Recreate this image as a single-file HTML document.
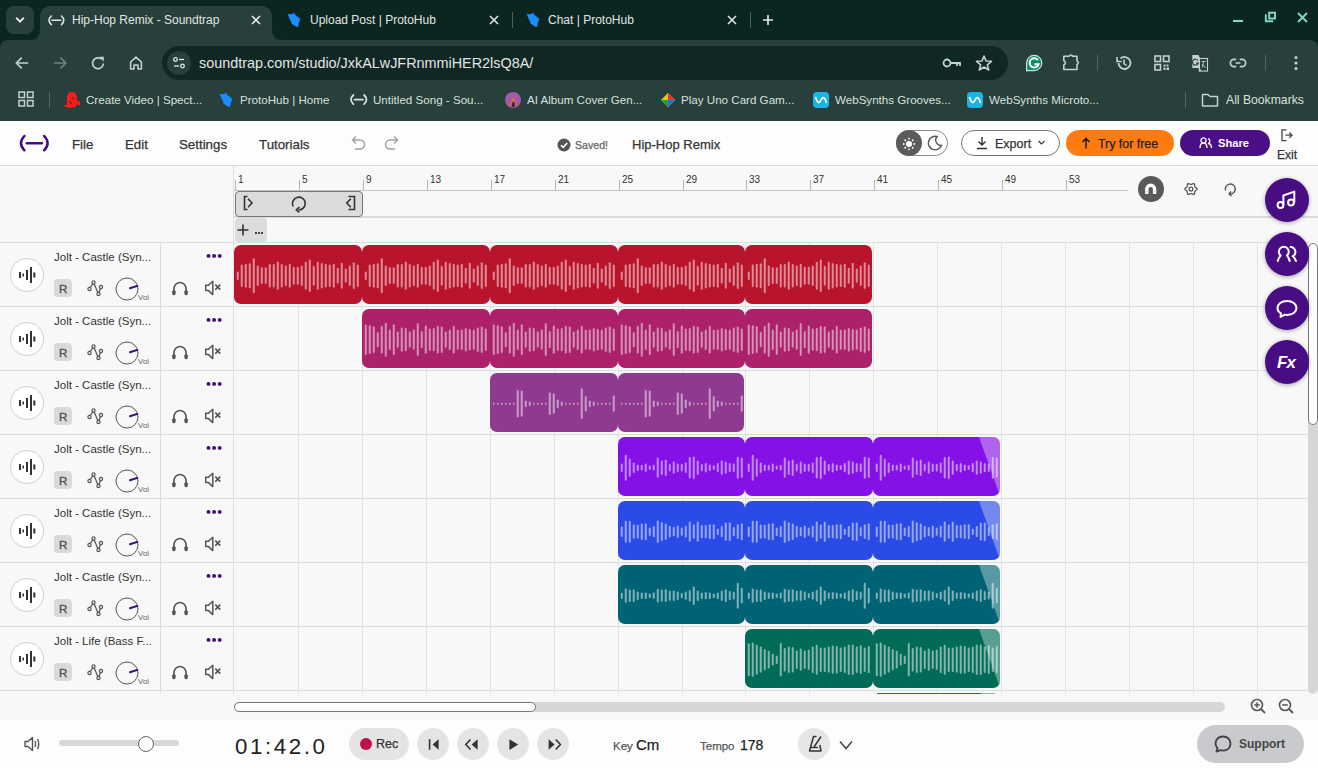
<!DOCTYPE html><html><head><meta charset="utf-8"><style>
*{margin:0;padding:0;box-sizing:border-box}
html,body{width:1318px;height:768px;overflow:hidden;background:#0b2521;font-family:"Liberation Sans", sans-serif}
.abs{position:absolute}
</style></head><body>
<div class="abs" style="left:0;top:0;width:1318px;height:40px;background:#0b2521"></div>
<div class="abs" style="left:6px;top:6px;width:28px;height:28px;border-radius:8px;background:#283f3b"></div>
<svg style="position:absolute;left:14px;top:14px" width="12" height="12" viewBox="0 0 12 12" ><path d="M2.2 3.8 L6 7.6 L9.8 3.8" stroke="#e1e6e4" stroke-width="2" fill="none"/></svg>
<div class="abs" style="left:40px;top:6px;width:232px;height:40px;border-radius:10px 10px 0 0;background:#283f3b"></div>
<svg style="position:absolute;left:30px;top:30px" width="10" height="10" viewBox="0 0 10 10" ><path d="M0 10 Q10 10 10 0 L10 10 Z" fill="#283f3b"/></svg>
<svg style="position:absolute;left:272px;top:30px" width="10" height="10" viewBox="0 0 10 10" ><path d="M10 10 Q0 10 0 0 L0 10 Z" fill="#283f3b"/></svg>
<svg style="position:absolute;left:45.6px;top:12.599999999999998px" width="20.8" height="14.6" viewBox="0 0 20.8 14.6" ><path d="M5.3 3 Q0.7000000000000002 7.3 5.3 11.6" stroke="#e1e6e4" stroke-width="1.6" fill="none" stroke-linecap="round"/><path d="M15.5 3 Q20.1 7.3 15.5 11.6" stroke="#e1e6e4" stroke-width="1.6" fill="none" stroke-linecap="round"/><line x1="6.0" y1="7.3" x2="14.8" y2="7.3" stroke="#e1e6e4" stroke-width="1.6" stroke-linecap="round"/></svg>
<div style="position:absolute;left:72px;top:14px;font-size:12px;line-height:12px;color:#e1e6e4;font-weight:normal;white-space:nowrap;">Hip-Hop Remix - Soundtrap</div>
<svg style="position:absolute;left:251.0px;top:15.0px" width="10" height="10" viewBox="0 0 10 10" ><path d="M1 1 L9 9 M9 1 L1 9" stroke="#e1e6e4" stroke-width="1.6"/></svg>
<svg style="position:absolute;left:283px;top:8px" width="22" height="22" viewBox="0 0 22 22" ><path d="M5.2 6.3 L9.5 6.7 L10.6 4.9 L12.3 7.2 L16.9 10.9 L16 13.5 L15.2 15.2 L14.9 18.6 L13.2 18.3 L8.9 15.5 L8.3 12.9 L7.2 11.2 Z" fill="#1a8fff" stroke="#1a8fff" stroke-width="0.8" stroke-linejoin="round"/></svg>
<div style="position:absolute;left:310px;top:14px;font-size:12px;line-height:12px;color:#e1e6e4;font-weight:normal;white-space:nowrap;">Upload Post | ProtoHub</div>
<svg style="position:absolute;left:489.0px;top:15.0px" width="10" height="10" viewBox="0 0 10 10" ><path d="M1 1 L9 9 M9 1 L1 9" stroke="#e1e6e4" stroke-width="1.6"/></svg>
<div class="abs" style="left:512px;top:12px;width:1px;height:16px;background:#4d605c"></div>
<svg style="position:absolute;left:522px;top:8px" width="22" height="22" viewBox="0 0 22 22" ><path d="M5.2 6.3 L9.5 6.7 L10.6 4.9 L12.3 7.2 L16.9 10.9 L16 13.5 L15.2 15.2 L14.9 18.6 L13.2 18.3 L8.9 15.5 L8.3 12.9 L7.2 11.2 Z" fill="#1a8fff" stroke="#1a8fff" stroke-width="0.8" stroke-linejoin="round"/></svg>
<div style="position:absolute;left:548px;top:14px;font-size:12px;line-height:12px;color:#e1e6e4;font-weight:normal;white-space:nowrap;">Chat | ProtoHub</div>
<svg style="position:absolute;left:727.0px;top:15.0px" width="10" height="10" viewBox="0 0 10 10" ><path d="M1 1 L9 9 M9 1 L1 9" stroke="#e1e6e4" stroke-width="1.6"/></svg>
<div class="abs" style="left:750px;top:12px;width:1px;height:16px;background:#4d605c"></div>
<svg style="position:absolute;left:763px;top:15px" width="10" height="10" viewBox="0 0 10 10" ><path d="M5 0 V10 M0 5 H10" stroke="#e1e6e4" stroke-width="1.7"/></svg>
<svg style="position:absolute;left:1230px;top:12px" width="16" height="14" viewBox="0 0 16 14" ><path d="M3 9 H13" stroke="#7fd8c6" stroke-width="2.1"/></svg>
<svg style="position:absolute;left:1260px;top:8px" width="20" height="18" viewBox="0 0 20 18" ><rect x="9.2" y="4.7" width="5.8" height="5.8" stroke="#7fd8c6" stroke-width="2" fill="none"/><path d="M5.8 6.3 V13.2 H13.2" stroke="#7fd8c6" stroke-width="1.9" fill="none"/></svg>
<svg style="position:absolute;left:1296.5px;top:11.5px" width="11" height="11" viewBox="0 0 11 11" ><path d="M1 1 L10 10 M10 1 L1 10" stroke="#7fd8c6" stroke-width="1.9"/></svg>
<div class="abs" style="left:0;top:40px;width:1318px;height:81px;background:#283f3b;border-radius:8px 8px 0 0"></div>
<svg style="position:absolute;left:13px;top:54px" width="18" height="18" viewBox="0 0 18 18" ><path d="M15.2 9 H3.4 M8.7 3.6 L3.4 9 L8.7 14.4" stroke="#c4d1cd" stroke-width="1.7" fill="none"/></svg>
<svg style="position:absolute;left:51px;top:54px" width="18" height="18" viewBox="0 0 18 18" ><path d="M3 9 H14.8 M9.5 3.6 L14.8 9 L9.5 14.4" stroke="#6f817d" stroke-width="1.7" fill="none"/></svg>
<svg style="position:absolute;left:89px;top:54px" width="18" height="18" viewBox="0 0 18 18" ><path d="M14.4 9.5 A5.4 5.4 0 1 1 12.6 5.2" stroke="#c4d1cd" stroke-width="1.7" fill="none"/><path d="M10.2 2.8 L14.8 2.8 L14.8 7.4 Z" fill="#c4d1cd"/></svg>
<svg style="position:absolute;left:127px;top:54px" width="18" height="18" viewBox="0 0 18 18" ><path d="M3.6 8 L9 3.2 L14.4 8 V15 H11 V11 H7 V15 H3.6 Z" stroke="#c4d1cd" stroke-width="1.6" fill="none" stroke-linejoin="round"/></svg>
<div class="abs" style="left:162px;top:46px;width:846px;height:34px;border-radius:17px;background:#112724"></div>
<div class="abs" style="left:167px;top:51px;width:24px;height:24px;border-radius:12px;background:#283f3b"></div>
<svg style="position:absolute;left:171px;top:55px" width="16" height="16" viewBox="0 0 16 16" ><circle cx="4.5" cy="4.5" r="1.8" stroke="#e1e6e4" stroke-width="1.3" fill="none"/><path d="M8 4.5 H13" stroke="#e1e6e4" stroke-width="1.3"/><circle cx="11.5" cy="11" r="1.8" stroke="#e1e6e4" stroke-width="1.3" fill="none"/><path d="M3 11 H8" stroke="#e1e6e4" stroke-width="1.3"/></svg>
<div style="position:absolute;left:199px;top:56px;font-size:14.4px;line-height:14.4px;color:#e1e6e4;font-weight:normal;white-space:nowrap;">soundtrap.com/studio/JxkALwJFRnmmiHER2lsQ8A/</div>
<svg style="position:absolute;left:942px;top:55px" width="20" height="16" viewBox="0 0 20 16" ><circle cx="5" cy="8" r="3.5" stroke="#c4d1cd" stroke-width="1.8" fill="none"/><path d="M8.5 8 H18 V11 M15 8 V11" stroke="#c4d1cd" stroke-width="1.8" fill="none"/></svg>
<svg style="position:absolute;left:975px;top:54px" width="18" height="18" viewBox="0 0 18 18" ><path d="M9 2 L11 7 L16.5 7.3 L12.3 10.8 L13.7 16 L9 13 L4.3 16 L5.7 10.8 L1.5 7.3 L7 7 Z" stroke="#c4d1cd" stroke-width="1.6" fill="none" stroke-linejoin="round"/></svg>
<svg style="position:absolute;left:1024px;top:53px" width="20" height="20" viewBox="0 0 20 20" ><path d="M2.6 18 V10 A7.6 7.6 0 1 1 10.2 17.6 H2.6 Z" fill="#0e8a6c" stroke="#cfe0d9" stroke-width="1.2" stroke-linejoin="round"/><path d="M14 7.2 A4.6 4.6 0 1 0 14.6 11.2 H10.4" stroke="#fff" stroke-width="2" fill="none"/></svg>
<svg style="position:absolute;left:1061px;top:52px" width="20" height="20" viewBox="0 0 20 20" ><path d="M2.8 4.2 H8.2 A1.8 1.8 0 0 1 11.6 4.2 H16 V9.1 A1.8 1.8 0 0 1 16 12.5 V17.5 H2.8 V13 A2.2 2.2 0 0 0 2.8 8.8 Z" stroke="#c4d1cd" stroke-width="1.6" fill="none" stroke-linejoin="round"/></svg>
<div class="abs" style="left:1097px;top:55px;width:1px;height:16px;background:#55675f"></div>
<svg style="position:absolute;left:1115px;top:54px" width="18" height="18" viewBox="0 0 18 18" ><path d="M3.5 9 A6 6 0 1 0 5.5 4.5" stroke="#c4d1cd" stroke-width="1.8" fill="none"/><path d="M2 3 V7.5 H6.5" stroke="#c4d1cd" stroke-width="1.6" fill="none"/><path d="M9 5.5 V9.5 L11.5 11.5" stroke="#c4d1cd" stroke-width="1.6" fill="none"/></svg>
<svg style="position:absolute;left:1153px;top:54px" width="18" height="18" viewBox="0 0 18 18" ><rect x="2" y="2" width="5.5" height="5.5" stroke="#c4d1cd" stroke-width="1.6" fill="none"/><rect x="10.5" y="2" width="5.5" height="5.5" stroke="#c4d1cd" stroke-width="1.6" fill="none"/><rect x="2" y="10.5" width="5.5" height="5.5" stroke="#c4d1cd" stroke-width="1.6" fill="none"/><path d="M10.5 10.5 h2 v2 h-2z M13.5 13.5 h2.5 v2.5 h-2.5z M13.5 10.5 h2 v2 h-2z M10.5 13.5 h2 v2.5 h-2z" fill="#c4d1cd"/></svg>
<svg style="position:absolute;left:1190px;top:52px" width="20" height="21" viewBox="0 0 20 21" ><path d="M2.3 3 H8.6 L10 6.2 V16 H2.3 Z" fill="#c4d1cd"/><rect x="9.3" y="6.5" width="8.2" height="12.6" stroke="#c4d1cd" stroke-width="1.1" fill="none"/><path d="M9.3 16 L10.5 19" stroke="#c4d1cd" stroke-width="1.2"/><path d="M8 8.6 A3 3 0 1 0 8.3 11.2 H5.9" stroke="#2a3f3b" stroke-width="1.2" fill="none"/><path d="M11.5 9.5 H15.8 M13.6 9 L12.2 15.5 M12.5 12 L15.5 16" stroke="#c4d1cd" stroke-width="0.9"/></svg>
<svg style="position:absolute;left:1228px;top:54px" width="20" height="18" viewBox="0 0 20 18" ><path d="M8.2 5.4 H6 A3.6 3.6 0 0 0 6 12.6 H8.2 M11.8 5.4 H14 A3.6 3.6 0 0 1 14 12.6 H11.8 M7.6 9 H12.4" stroke="#c4d1cd" stroke-width="1.7" fill="none"/></svg>
<div class="abs" style="left:1265px;top:55px;width:1px;height:16px;background:#55675f"></div>
<svg style="position:absolute;left:1290px;top:54px" width="12" height="18" viewBox="0 0 12 18" ><circle cx="6" cy="3.5" r="1.6" fill="#c4d1cd"/><circle cx="6" cy="9" r="1.6" fill="#c4d1cd"/><circle cx="6" cy="14.5" r="1.6" fill="#c4d1cd"/></svg>
<svg style="position:absolute;left:18px;top:91px" width="16" height="16" viewBox="0 0 16 16" ><rect x="1" y="1" width="5.5" height="5.5" stroke="#c4d1cd" stroke-width="1.5" fill="none"/><rect x="9.5" y="1" width="5.5" height="5.5" stroke="#c4d1cd" stroke-width="1.5" fill="none"/><rect x="1" y="9.5" width="5.5" height="5.5" stroke="#c4d1cd" stroke-width="1.5" fill="none"/><rect x="9.5" y="9.5" width="5.5" height="5.5" stroke="#c4d1cd" stroke-width="1.5" fill="none"/></svg>
<div class="abs" style="left:49px;top:92px;width:1px;height:16px;background:#55675f"></div>
<svg style="position:absolute;left:58px;top:88px" width="26" height="22" viewBox="0 0 26 22" ><path d="M9 16 V9 A5 5 0 0 1 19 9 V13 L22 13.5 L22 17 L19 16.5 Q17 20 12 19.8 Q7 19.5 6 17.5 Q8 17 9 16Z" fill="#ff1a1a"/><ellipse cx="14.6" cy="10.2" rx="0.7" ry="1.2" fill="#2a3f3b"/><ellipse cx="16.7" cy="10" rx="0.6" ry="0.7" fill="#7a2020"/><path d="M10.5 13.5 L13.5 14.5 L13 16" stroke="#2a3f3b" stroke-width="1" fill="none"/></svg>
<div style="position:absolute;left:86px;top:94px;font-size:11.6px;line-height:11.6px;color:#d9e0de;font-weight:normal;white-space:nowrap;">Create Video | Spect...</div>
<svg style="position:absolute;left:215px;top:88px" width="22" height="22" viewBox="0 0 22 22" ><path d="M5.2 6.3 L9.5 6.7 L10.6 4.9 L12.3 7.2 L16.9 10.9 L16 13.5 L15.2 15.2 L14.9 18.6 L13.2 18.3 L8.9 15.5 L8.3 12.9 L7.2 11.2 Z" fill="#1a8fff" stroke="#1a8fff" stroke-width="0.8" stroke-linejoin="round"/></svg>
<div style="position:absolute;left:240px;top:94px;font-size:11.6px;line-height:11.6px;color:#d9e0de;font-weight:normal;white-space:nowrap;">ProtoHub | Home</div>
<svg style="position:absolute;left:348.3px;top:92.30000000000001px" width="21.5" height="15.2" viewBox="0 0 21.5 15.2" ><path d="M5.4 3 Q0.6000000000000001 7.6 5.4 12.2" stroke="#d9e0de" stroke-width="1.8" fill="none" stroke-linecap="round"/><path d="M16.1 3 Q20.9 7.6 16.1 12.2" stroke="#d9e0de" stroke-width="1.8" fill="none" stroke-linecap="round"/><line x1="6.5" y1="7.6" x2="15.0" y2="7.6" stroke="#d9e0de" stroke-width="1.8" stroke-linecap="round"/></svg>
<div style="position:absolute;left:373px;top:94px;font-size:11.6px;line-height:11.6px;color:#d9e0de;font-weight:normal;white-space:nowrap;">Untitled Song - Sou...</div>
<svg style="position:absolute;left:505px;top:92px" width="16" height="16" viewBox="0 0 16 16" ><circle cx="8" cy="8" r="8" fill="#a45aa8"/><path d="M5 15 L6 8 Q8 4 10 7 L11.5 15 Z" fill="#d06a50"/><path d="M6.5 15 L7.5 10 L9.5 10 L10 15Z" fill="#3a2a3a"/></svg>
<div style="position:absolute;left:527px;top:94px;font-size:11.6px;line-height:11.6px;color:#d9e0de;font-weight:normal;white-space:nowrap;">AI Album Cover Gen...</div>
<svg style="position:absolute;left:660px;top:92px" width="16" height="16" viewBox="0 0 16 16" ><path d="M8 1 L15 8 L8 15 L1 8Z" fill="#f2c21a"/><path d="M8 1 L15 8 L8 8Z" fill="#e33"/><path d="M1 8 L8 15 L8 8Z" fill="#2a9d3a"/><path d="M8 8 L15 8 L8 15Z" fill="#2a6fdd"/></svg>
<div style="position:absolute;left:681px;top:94px;font-size:11.6px;line-height:11.6px;color:#d9e0de;font-weight:normal;white-space:nowrap;">Play Uno Card Gam...</div>
<svg style="position:absolute;left:813px;top:92px" width="16" height="16" viewBox="0 0 16 16" ><rect width="16" height="16" rx="4" fill="#19b5e5"/><path d="M2.5 5 Q5 14 8 8 Q11 2 13.5 11" stroke="#fff" stroke-width="1.6" fill="none"/></svg>
<div style="position:absolute;left:835px;top:94px;font-size:11.6px;line-height:11.6px;color:#d9e0de;font-weight:normal;white-space:nowrap;">WebSynths Grooves...</div>
<svg style="position:absolute;left:967px;top:92px" width="16" height="16" viewBox="0 0 16 16" ><rect width="16" height="16" rx="4" fill="#19b5e5"/><path d="M2.5 5 Q5 14 8 8 Q11 2 13.5 11" stroke="#fff" stroke-width="1.6" fill="none"/></svg>
<div style="position:absolute;left:989px;top:94px;font-size:11.6px;line-height:11.6px;color:#d9e0de;font-weight:normal;white-space:nowrap;">WebSynths Microto...</div>
<div class="abs" style="left:1185px;top:92px;width:1px;height:16px;background:#55675f"></div>
<svg style="position:absolute;left:1201px;top:92px" width="18" height="16" viewBox="0 0 18 16" ><path d="M1.5 2.5 H7 L9 4.5 H16.5 V14 H1.5 Z" stroke="#c4d1cd" stroke-width="1.5" fill="none" stroke-linejoin="round"/></svg>
<div style="position:absolute;left:1226px;top:94px;font-size:12.2px;line-height:12.2px;color:#d9e0de;font-weight:normal;white-space:nowrap;">All Bookmarks</div>
<div class="abs" style="left:0;top:121px;width:1318px;height:647px;background:#f8f8f8"></div>
<div class="abs" style="left:0;top:121px;width:1318px;height:45px;background:#fdfdfd;border-bottom:1px solid #d8d8d8;box-shadow:inset 0 -1px 0 #ffffff"></div>
<svg style="position:absolute;left:17.6px;top:133.04999999999998px" width="32.6" height="20.3" viewBox="0 0 32.6 20.3" ><path d="M6.4 3 Q-0.3999999999999999 10.15 6.4 17.3" stroke="#440b85" stroke-width="2.5" fill="none" stroke-linecap="round"/><path d="M26.200000000000003 3 Q33.0 10.15 26.200000000000003 17.3" stroke="#440b85" stroke-width="2.5" fill="none" stroke-linecap="round"/><line x1="8.8" y1="10.15" x2="23.8" y2="10.15" stroke="#440b85" stroke-width="2.5" stroke-linecap="round"/></svg>
<div style="position:absolute;left:72px;top:138px;font-size:13.3px;line-height:13.3px;color:#333333;font-weight:normal;white-space:nowrap;-webkit-text-stroke:0.25px currentColor">File</div>
<div style="position:absolute;left:125px;top:138px;font-size:13.3px;line-height:13.3px;color:#333333;font-weight:normal;white-space:nowrap;-webkit-text-stroke:0.25px currentColor">Edit</div>
<div style="position:absolute;left:179px;top:138px;font-size:13.3px;line-height:13.3px;color:#333333;font-weight:normal;white-space:nowrap;-webkit-text-stroke:0.25px currentColor">Settings</div>
<div style="position:absolute;left:259px;top:138px;font-size:13.3px;line-height:13.3px;color:#333333;font-weight:normal;white-space:nowrap;-webkit-text-stroke:0.25px currentColor">Tutorials</div>
<svg style="position:absolute;left:349px;top:134px" width="18" height="18" viewBox="0 0 18 18" ><path d="M4 6 H11 A4.5 4.5 0 0 1 11 15 H6" stroke="#a0a0a0" stroke-width="1.5" fill="none"/><path d="M7 2.5 L3.5 6 L7 9.5" stroke="#a0a0a0" stroke-width="1.5" fill="none"/></svg>
<svg style="position:absolute;left:383px;top:134px" width="18" height="18" viewBox="0 0 18 18" ><path d="M14 6 H7 A4.5 4.5 0 0 0 7 15 H12" stroke="#a0a0a0" stroke-width="1.5" fill="none"/><path d="M11 2.5 L14.5 6 L11 9.5" stroke="#a0a0a0" stroke-width="1.5" fill="none"/></svg>
<svg style="position:absolute;left:556.5px;top:137.5px" width="14" height="14" viewBox="0 0 14 14" ><circle cx="7" cy="7" r="6.5" fill="#555"/><path d="M4 7.2 L6.2 9.4 L10.2 5" stroke="#fff" stroke-width="1.6" fill="none"/></svg>
<div style="position:absolute;left:575px;top:140px;font-size:10.6px;line-height:10.6px;color:#666;font-weight:normal;white-space:nowrap;-webkit-text-stroke:0.25px currentColor">Saved!</div>
<div style="position:absolute;left:632px;top:138px;font-size:13px;line-height:13px;color:#333333;font-weight:normal;white-space:nowrap;-webkit-text-stroke:0.25px currentColor">Hip-Hop Remix</div>
<div class="abs" style="left:896px;top:130px;width:52px;height:26px;border-radius:13px;border:1px solid #8a8a8a;background:#fff"></div>
<div class="abs" style="left:896px;top:130px;width:26px;height:26px;border-radius:13px;background:#5b5b5b"></div>
<svg style="position:absolute;left:900.5px;top:135.5px" width="16" height="16" viewBox="0 0 16 16" ><circle cx="8" cy="8" r="3" fill="#fff"/><circle cx="13.30" cy="8.00" r="0.9" fill="#fff"/><circle cx="11.75" cy="11.75" r="0.9" fill="#fff"/><circle cx="8.00" cy="13.30" r="0.9" fill="#fff"/><circle cx="4.25" cy="11.75" r="0.9" fill="#fff"/><circle cx="2.70" cy="8.00" r="0.9" fill="#fff"/><circle cx="4.25" cy="4.25" r="0.9" fill="#fff"/><circle cx="8.00" cy="2.70" r="0.9" fill="#fff"/><circle cx="11.75" cy="4.25" r="0.9" fill="#fff"/></svg>
<svg style="position:absolute;left:926px;top:134px" width="18" height="18" viewBox="0 0 18 18" ><path d="M11 2.5 A6.8 6.8 0 1 0 15.5 11.5 A5.5 5.5 0 0 1 11 2.5Z" stroke="#555" stroke-width="1.4" fill="none"/></svg>
<div class="abs" style="left:961px;top:130px;width:99px;height:26px;border-radius:13px;border:1px solid #777;background:#fff"></div>
<svg style="position:absolute;left:975px;top:136px" width="14" height="14" viewBox="0 0 14 14" ><path d="M7 1 V9 M3.5 5.5 L7 9 L10.5 5.5 M2 12.5 H12" stroke="#333" stroke-width="1.4" fill="none"/></svg>
<div style="position:absolute;left:995px;top:138px;font-size:12.5px;line-height:12.5px;color:#333333;font-weight:normal;white-space:nowrap;-webkit-text-stroke:0.25px currentColor">Export</div>
<svg style="position:absolute;left:1037px;top:139px" width="9" height="7" viewBox="0 0 9 7" ><path d="M1.5 2 L4.5 5 L7.5 2" stroke="#333" stroke-width="1.1" fill="none"/></svg>
<div class="abs" style="left:1066px;top:130px;width:108px;height:26px;border-radius:13px;background:#ff7b0f"></div>
<svg style="position:absolute;left:1080px;top:136px" width="12" height="14" viewBox="0 0 12 14" ><path d="M6 12.5 V2.5 M2.5 6 L6 2.5 L9.5 6" stroke="#222" stroke-width="1.6" fill="none"/></svg>
<div style="position:absolute;left:1098px;top:138px;font-size:12.4px;line-height:12.4px;color:#222;font-weight:normal;white-space:nowrap;-webkit-text-stroke:0.25px currentColor">Try for free</div>
<div class="abs" style="left:1180px;top:130px;width:90px;height:26px;border-radius:13px;background:#4a0e85"></div>
<svg style="position:absolute;left:1198.5px;top:137px" width="14" height="12" viewBox="0 0 14 12" ><path d="M1 11 Q1 6 4.5 6 Q8 6 8 11 M4.5 6 A2.6 2.6 0 1 1 4.6 6 M6.5 11 M9 1.5 A2.6 2.6 0 0 1 9 6.5 Q12.5 6.5 12.5 11" stroke="#fff" stroke-width="1.3" fill="none"/></svg>
<div style="position:absolute;left:1218px;top:138px;font-size:11.2px;line-height:11.2px;color:#fff;font-weight:bold;white-space:nowrap;">Share</div>
<svg style="position:absolute;left:1280px;top:128px" width="14" height="14" viewBox="0 0 14 14" ><path d="M6.5 1.8 H2 V12.6 H6.5" stroke="#444" stroke-width="1.3" fill="none"/><path d="M5.5 7.2 H12 M9.3 4.5 L12 7.2 L9.3 9.9" stroke="#444" stroke-width="1.3" fill="none"/></svg>
<div style="position:absolute;left:1277px;top:148.5px;font-size:12px;line-height:12px;color:#333333;font-weight:normal;white-space:nowrap;-webkit-text-stroke:0.25px currentColor">Exit</div>
<div class="abs" style="left:233px;top:166px;width:1px;height:76px;background:#dedede"></div>
<div class="abs" style="left:235px;top:180px;width:1px;height:10px;background:#b5b5b5"></div>
<div style="position:absolute;left:238px;top:175px;font-size:10px;line-height:10px;color:#333;font-weight:normal;white-space:nowrap;">1</div>
<div class="abs" style="left:299px;top:180px;width:1px;height:10px;background:#b5b5b5"></div>
<div style="position:absolute;left:302px;top:175px;font-size:10px;line-height:10px;color:#333;font-weight:normal;white-space:nowrap;">5</div>
<div class="abs" style="left:363px;top:180px;width:1px;height:10px;background:#b5b5b5"></div>
<div style="position:absolute;left:366px;top:175px;font-size:10px;line-height:10px;color:#333;font-weight:normal;white-space:nowrap;">9</div>
<div class="abs" style="left:427px;top:180px;width:1px;height:10px;background:#b5b5b5"></div>
<div style="position:absolute;left:430px;top:175px;font-size:10px;line-height:10px;color:#333;font-weight:normal;white-space:nowrap;">13</div>
<div class="abs" style="left:491px;top:180px;width:1px;height:10px;background:#b5b5b5"></div>
<div style="position:absolute;left:494px;top:175px;font-size:10px;line-height:10px;color:#333;font-weight:normal;white-space:nowrap;">17</div>
<div class="abs" style="left:555px;top:180px;width:1px;height:10px;background:#b5b5b5"></div>
<div style="position:absolute;left:558px;top:175px;font-size:10px;line-height:10px;color:#333;font-weight:normal;white-space:nowrap;">21</div>
<div class="abs" style="left:619px;top:180px;width:1px;height:10px;background:#b5b5b5"></div>
<div style="position:absolute;left:622px;top:175px;font-size:10px;line-height:10px;color:#333;font-weight:normal;white-space:nowrap;">25</div>
<div class="abs" style="left:683px;top:180px;width:1px;height:10px;background:#b5b5b5"></div>
<div style="position:absolute;left:686px;top:175px;font-size:10px;line-height:10px;color:#333;font-weight:normal;white-space:nowrap;">29</div>
<div class="abs" style="left:746px;top:180px;width:1px;height:10px;background:#b5b5b5"></div>
<div style="position:absolute;left:749px;top:175px;font-size:10px;line-height:10px;color:#333;font-weight:normal;white-space:nowrap;">33</div>
<div class="abs" style="left:810px;top:180px;width:1px;height:10px;background:#b5b5b5"></div>
<div style="position:absolute;left:813px;top:175px;font-size:10px;line-height:10px;color:#333;font-weight:normal;white-space:nowrap;">37</div>
<div class="abs" style="left:874px;top:180px;width:1px;height:10px;background:#b5b5b5"></div>
<div style="position:absolute;left:877px;top:175px;font-size:10px;line-height:10px;color:#333;font-weight:normal;white-space:nowrap;">41</div>
<div class="abs" style="left:938px;top:180px;width:1px;height:10px;background:#b5b5b5"></div>
<div style="position:absolute;left:941px;top:175px;font-size:10px;line-height:10px;color:#333;font-weight:normal;white-space:nowrap;">45</div>
<div class="abs" style="left:1002px;top:180px;width:1px;height:10px;background:#b5b5b5"></div>
<div style="position:absolute;left:1005px;top:175px;font-size:10px;line-height:10px;color:#333;font-weight:normal;white-space:nowrap;">49</div>
<div class="abs" style="left:1066px;top:180px;width:1px;height:10px;background:#b5b5b5"></div>
<div style="position:absolute;left:1069px;top:175px;font-size:10px;line-height:10px;color:#333;font-weight:normal;white-space:nowrap;">53</div>
<div class="abs" style="left:234px;top:190px;width:894px;height:1px;background:#c4c4c4"></div>
<div class="abs" style="left:234px;top:216px;width:1084px;height:2px;background:#dadada"></div>
<div class="abs" style="left:235px;top:191px;width:128px;height:26px;border-radius:4px;border:1px solid #777;background:#dcdcdc"></div>
<svg style="position:absolute;left:240px;top:192px" width="20" height="22" viewBox="0 0 20 22" ><path d="M7.5 4.5 H4.5 V17.5 H7.5" stroke="#333" stroke-width="1.6" fill="none"/><path d="M8 6.8 L12 11 L8 15.2" stroke="#333" stroke-width="1.6" fill="none"/></svg>
<svg style="position:absolute;left:288px;top:193px" width="21" height="21" viewBox="0 0 21 21" ><path d="M5.2 13.5 A6.4 6.4 0 1 1 10.5 16.9" stroke="#333" stroke-width="1.6" fill="none"/><path d="M11.5 14 L8.2 16.9 L11.3 19.3" stroke="#333" stroke-width="1.6" fill="none" stroke-linejoin="round"/></svg>
<svg style="position:absolute;left:342px;top:192px" width="20" height="22" viewBox="0 0 20 22" ><path d="M6.5 4.5 H12.5 V17.5 H6.5" stroke="#333" stroke-width="1.6" fill="none"/><path d="M8.8 6.8 L4.8 11 L8.8 15.2" stroke="#333" stroke-width="1.6" fill="none"/></svg>
<div class="abs" style="left:235px;top:218px;width:32px;height:24px;border-radius:4px;background:#dcdcdc"></div>
<svg style="position:absolute;left:237px;top:224px" width="12" height="12" viewBox="0 0 12 12" ><path d="M6 0.5 V11.5 M0.5 6 H11.5" stroke="#333" stroke-width="1.6"/></svg>
<div class="abs" style="left:255px;top:232px;width:8px;height:2px;background:repeating-linear-gradient(90deg,#444 0 1.6px,transparent 1.6px 3.2px)"></div>
<div class="abs" style="left:1138px;top:176px;width:26px;height:26px;border-radius:13px;background:#5a5a5a"></div>
<svg style="position:absolute;left:1143px;top:182px" width="15" height="15" viewBox="0 0 15 15" ><path d="M3.8 12 V7.2 A3.9 3.9 0 0 1 11.6 7.2 V12" stroke="#fff" stroke-width="3.4" fill="none"/><path d="M2.1 9.5 H5.5 M9.9 9.5 H13.3" stroke="#ddd" stroke-width="0.8"/></svg>
<svg style="position:absolute;left:1183px;top:181px" width="16" height="16" viewBox="0 0 16 16" ><circle cx="8" cy="8" r="1.9" stroke="#555" stroke-width="1.3" fill="none"/><path d="M14.10 8.00 L14.00 8.39 L13.73 8.75 L13.36 9.07 L12.96 9.33 L12.60 9.56 L12.33 9.79 L12.14 10.04 L11.98 10.30 L11.83 10.56 L11.72 10.85 L11.65 11.20 L11.63 11.63 L11.60 12.11 L11.52 12.59 L11.34 13.00 L11.05 13.28 L10.66 13.39 L10.21 13.34 L9.76 13.17 L9.33 12.96 L8.95 12.76 L8.61 12.64 L8.30 12.60 L8.00 12.60 L7.70 12.60 L7.39 12.64 L7.05 12.76 L6.67 12.96 L6.24 13.17 L5.79 13.34 L5.34 13.39 L4.95 13.28 L4.66 13.00 L4.48 12.59 L4.40 12.11 L4.37 11.63 L4.35 11.20 L4.28 10.85 L4.17 10.56 L4.02 10.30 L3.86 10.04 L3.67 9.79 L3.40 9.56 L3.04 9.33 L2.64 9.07 L2.27 8.75 L2.00 8.39 L1.90 8.00 L2.00 7.61 L2.27 7.25 L2.64 6.93 L3.04 6.67 L3.40 6.44 L3.67 6.21 L3.86 5.96 L4.02 5.70 L4.17 5.44 L4.28 5.15 L4.35 4.80 L4.37 4.37 L4.40 3.89 L4.48 3.41 L4.66 3.00 L4.95 2.72 L5.34 2.61 L5.79 2.66 L6.24 2.83 L6.67 3.04 L7.05 3.24 L7.39 3.36 L7.70 3.40 L8.00 3.40 L8.30 3.40 L8.61 3.36 L8.95 3.24 L9.33 3.04 L9.76 2.83 L10.21 2.66 L10.66 2.61 L11.05 2.72 L11.34 3.00 L11.52 3.41 L11.60 3.89 L11.63 4.37 L11.65 4.80 L11.72 5.15 L11.83 5.44 L11.98 5.70 L12.14 5.96 L12.33 6.21 L12.60 6.44 L12.96 6.67 L13.36 6.93 L13.73 7.25 L14.00 7.61Z" stroke="#555" stroke-width="1.3" fill="none" stroke-linejoin="round"/></svg>
<svg style="position:absolute;left:1222px;top:181px" width="16" height="16" viewBox="0 0 16 16" ><path d="M3.5 9.5 A5 5 0 1 1 8 13" stroke="#555" stroke-width="1.4" fill="none"/><path d="M9 10.5 L7 13 L9.5 15" stroke="#555" stroke-width="1.4" fill="none"/></svg>
<div class="abs" style="left:233px;top:242px;width:1px;height:452px;background:#dedede"></div>
<div class="abs" style="left:298px;top:242px;width:1px;height:452px;background:#e3e3e3"></div>
<div class="abs" style="left:362px;top:242px;width:1px;height:452px;background:#e3e3e3"></div>
<div class="abs" style="left:426px;top:242px;width:1px;height:452px;background:#e3e3e3"></div>
<div class="abs" style="left:490px;top:242px;width:1px;height:452px;background:#e3e3e3"></div>
<div class="abs" style="left:554px;top:242px;width:1px;height:452px;background:#e3e3e3"></div>
<div class="abs" style="left:618px;top:242px;width:1px;height:452px;background:#e3e3e3"></div>
<div class="abs" style="left:682px;top:242px;width:1px;height:452px;background:#e3e3e3"></div>
<div class="abs" style="left:745px;top:242px;width:1px;height:452px;background:#e3e3e3"></div>
<div class="abs" style="left:809px;top:242px;width:1px;height:452px;background:#e3e3e3"></div>
<div class="abs" style="left:873px;top:242px;width:1px;height:452px;background:#e3e3e3"></div>
<div class="abs" style="left:937px;top:242px;width:1px;height:452px;background:#e3e3e3"></div>
<div class="abs" style="left:1001px;top:242px;width:1px;height:452px;background:#e3e3e3"></div>
<div class="abs" style="left:1065px;top:242px;width:1px;height:452px;background:#e3e3e3"></div>
<div class="abs" style="left:1129px;top:242px;width:1px;height:452px;background:#e3e3e3"></div>
<div class="abs" style="left:1193px;top:242px;width:1px;height:452px;background:#e3e3e3"></div>
<div class="abs" style="left:1257px;top:242px;width:1px;height:452px;background:#e3e3e3"></div>
<div class="abs" style="left:0;top:242px;width:1308px;height:1px;background:#dcdcdc"></div>
<div class="abs" style="left:0;top:306px;width:1308px;height:1px;background:#dcdcdc"></div>
<div class="abs" style="left:0;top:370px;width:1308px;height:1px;background:#dcdcdc"></div>
<div class="abs" style="left:0;top:434px;width:1308px;height:1px;background:#dcdcdc"></div>
<div class="abs" style="left:0;top:498px;width:1308px;height:1px;background:#dcdcdc"></div>
<div class="abs" style="left:0;top:562px;width:1308px;height:1px;background:#dcdcdc"></div>
<div class="abs" style="left:0;top:626px;width:1308px;height:1px;background:#dcdcdc"></div>
<div class="abs" style="left:0;top:690px;width:1308px;height:1px;background:#dcdcdc"></div>
<div class="abs" style="left:160px;top:242px;width:1px;height:452px;background:#dcdcdc"></div>
<div class="abs" style="left:10px;top:258px;width:34px;height:34px;border-radius:17px;background:#fff;border:1px solid #cfcfcf"></div>
<svg style="position:absolute;left:18px;top:267px" width="18" height="17" viewBox="0 0 18 17" ><rect x="1" y="5" width="2" height="6" fill="#333"/><rect x="4.5" y="6.5" width="1.5" height="3" fill="#333"/><rect x="8" y="3" width="2" height="10" fill="#333"/><rect x="12" y="0" width="2" height="16" fill="#333"/><rect x="15.3" y="5.5" width="2" height="5" fill="#333"/></svg>
<div style="position:absolute;left:54px;top:252px;font-size:11.5px;line-height:11.5px;color:#333;font-weight:normal;white-space:nowrap;">Jolt - Castle (Syn...</div>
<svg style="position:absolute;left:205px;top:253px" width="18" height="6" viewBox="0 0 18 6" ><circle cx="3.5" cy="2.9" r="1.95" fill="#3b0a78"/><circle cx="9.1" cy="2.9" r="1.95" fill="#3b0a78"/><circle cx="14.7" cy="2.9" r="1.95" fill="#3b0a78"/></svg>
<div class="abs" style="left:54px;top:279px;width:18px;height:18px;border-radius:4px;background:#dadada"></div>
<div style="position:absolute;left:59px;top:284px;font-size:11.5px;line-height:11.5px;color:#555;font-weight:normal;white-space:nowrap;-webkit-text-stroke:0.4px #555">R</div>
<svg style="position:absolute;left:87px;top:280px" width="17" height="17" viewBox="0 0 17 17" ><path d="M6.5 2.5 L2.5 9 M6.5 2.5 L11.5 14 L14 7" stroke="#555" stroke-width="1.3" fill="none"/><circle cx="6.5" cy="2.5" r="1.6" fill="#f7f7f7" stroke="#555" stroke-width="1.2"/><circle cx="2.5" cy="9" r="1.6" fill="#f7f7f7" stroke="#555" stroke-width="1.2"/><circle cx="11.5" cy="14" r="1.6" fill="#f7f7f7" stroke="#555" stroke-width="1.2"/><circle cx="14" cy="7" r="1.6" fill="#f7f7f7" stroke="#555" stroke-width="1.2"/></svg>
<svg style="position:absolute;left:115px;top:277px" width="26" height="26" viewBox="0 0 26 26" ><circle cx="12" cy="12" r="11" stroke="#555" stroke-width="1" fill="none"/><path d="M14.3 11.5 L23 8.6" stroke="#3b0a78" stroke-width="2"/></svg>
<div style="position:absolute;left:138px;top:293.5px;font-size:8px;line-height:8px;color:#666;font-weight:normal;white-space:nowrap;">Vol</div>
<svg style="position:absolute;left:171px;top:280px" width="18" height="16" viewBox="0 0 18 16" ><path d="M3 12 V8.5 A6 6 0 0 1 15 8.5 V12" stroke="#555" stroke-width="1.6" fill="none"/><ellipse cx="2.9" cy="12.6" rx="1.9" ry="2.7" fill="#555"/><ellipse cx="15.1" cy="12.6" rx="1.9" ry="2.7" fill="#555"/></svg>
<svg style="position:absolute;left:204px;top:280px" width="18" height="16" viewBox="0 0 18 16" ><path d="M1.7 5.2 H4.5 L8.8 1.2 V14.6 L4.5 10.6 H1.7 Z" stroke="#555" stroke-width="1.5" fill="none" stroke-linejoin="round"/><path d="M11.3 4.6 L16.3 9.6 M16.3 4.6 L11.3 9.6" stroke="#555" stroke-width="1.6"/></svg>
<div class="abs" style="left:10px;top:322px;width:34px;height:34px;border-radius:17px;background:#fff;border:1px solid #cfcfcf"></div>
<svg style="position:absolute;left:18px;top:331px" width="18" height="17" viewBox="0 0 18 17" ><rect x="1" y="5" width="2" height="6" fill="#333"/><rect x="4.5" y="6.5" width="1.5" height="3" fill="#333"/><rect x="8" y="3" width="2" height="10" fill="#333"/><rect x="12" y="0" width="2" height="16" fill="#333"/><rect x="15.3" y="5.5" width="2" height="5" fill="#333"/></svg>
<div style="position:absolute;left:54px;top:316px;font-size:11.5px;line-height:11.5px;color:#333;font-weight:normal;white-space:nowrap;">Jolt - Castle (Syn...</div>
<svg style="position:absolute;left:205px;top:317px" width="18" height="6" viewBox="0 0 18 6" ><circle cx="3.5" cy="2.9" r="1.95" fill="#3b0a78"/><circle cx="9.1" cy="2.9" r="1.95" fill="#3b0a78"/><circle cx="14.7" cy="2.9" r="1.95" fill="#3b0a78"/></svg>
<div class="abs" style="left:54px;top:343px;width:18px;height:18px;border-radius:4px;background:#dadada"></div>
<div style="position:absolute;left:59px;top:348px;font-size:11.5px;line-height:11.5px;color:#555;font-weight:normal;white-space:nowrap;-webkit-text-stroke:0.4px #555">R</div>
<svg style="position:absolute;left:87px;top:344px" width="17" height="17" viewBox="0 0 17 17" ><path d="M6.5 2.5 L2.5 9 M6.5 2.5 L11.5 14 L14 7" stroke="#555" stroke-width="1.3" fill="none"/><circle cx="6.5" cy="2.5" r="1.6" fill="#f7f7f7" stroke="#555" stroke-width="1.2"/><circle cx="2.5" cy="9" r="1.6" fill="#f7f7f7" stroke="#555" stroke-width="1.2"/><circle cx="11.5" cy="14" r="1.6" fill="#f7f7f7" stroke="#555" stroke-width="1.2"/><circle cx="14" cy="7" r="1.6" fill="#f7f7f7" stroke="#555" stroke-width="1.2"/></svg>
<svg style="position:absolute;left:115px;top:341px" width="26" height="26" viewBox="0 0 26 26" ><circle cx="12" cy="12" r="11" stroke="#555" stroke-width="1" fill="none"/><path d="M14.3 11.5 L23 8.6" stroke="#3b0a78" stroke-width="2"/></svg>
<div style="position:absolute;left:138px;top:357.5px;font-size:8px;line-height:8px;color:#666;font-weight:normal;white-space:nowrap;">Vol</div>
<svg style="position:absolute;left:171px;top:344px" width="18" height="16" viewBox="0 0 18 16" ><path d="M3 12 V8.5 A6 6 0 0 1 15 8.5 V12" stroke="#555" stroke-width="1.6" fill="none"/><ellipse cx="2.9" cy="12.6" rx="1.9" ry="2.7" fill="#555"/><ellipse cx="15.1" cy="12.6" rx="1.9" ry="2.7" fill="#555"/></svg>
<svg style="position:absolute;left:204px;top:344px" width="18" height="16" viewBox="0 0 18 16" ><path d="M1.7 5.2 H4.5 L8.8 1.2 V14.6 L4.5 10.6 H1.7 Z" stroke="#555" stroke-width="1.5" fill="none" stroke-linejoin="round"/><path d="M11.3 4.6 L16.3 9.6 M16.3 4.6 L11.3 9.6" stroke="#555" stroke-width="1.6"/></svg>
<div class="abs" style="left:10px;top:386px;width:34px;height:34px;border-radius:17px;background:#fff;border:1px solid #cfcfcf"></div>
<svg style="position:absolute;left:18px;top:395px" width="18" height="17" viewBox="0 0 18 17" ><rect x="1" y="5" width="2" height="6" fill="#333"/><rect x="4.5" y="6.5" width="1.5" height="3" fill="#333"/><rect x="8" y="3" width="2" height="10" fill="#333"/><rect x="12" y="0" width="2" height="16" fill="#333"/><rect x="15.3" y="5.5" width="2" height="5" fill="#333"/></svg>
<div style="position:absolute;left:54px;top:380px;font-size:11.5px;line-height:11.5px;color:#333;font-weight:normal;white-space:nowrap;">Jolt - Castle (Syn...</div>
<svg style="position:absolute;left:205px;top:381px" width="18" height="6" viewBox="0 0 18 6" ><circle cx="3.5" cy="2.9" r="1.95" fill="#3b0a78"/><circle cx="9.1" cy="2.9" r="1.95" fill="#3b0a78"/><circle cx="14.7" cy="2.9" r="1.95" fill="#3b0a78"/></svg>
<div class="abs" style="left:54px;top:407px;width:18px;height:18px;border-radius:4px;background:#dadada"></div>
<div style="position:absolute;left:59px;top:412px;font-size:11.5px;line-height:11.5px;color:#555;font-weight:normal;white-space:nowrap;-webkit-text-stroke:0.4px #555">R</div>
<svg style="position:absolute;left:87px;top:408px" width="17" height="17" viewBox="0 0 17 17" ><path d="M6.5 2.5 L2.5 9 M6.5 2.5 L11.5 14 L14 7" stroke="#555" stroke-width="1.3" fill="none"/><circle cx="6.5" cy="2.5" r="1.6" fill="#f7f7f7" stroke="#555" stroke-width="1.2"/><circle cx="2.5" cy="9" r="1.6" fill="#f7f7f7" stroke="#555" stroke-width="1.2"/><circle cx="11.5" cy="14" r="1.6" fill="#f7f7f7" stroke="#555" stroke-width="1.2"/><circle cx="14" cy="7" r="1.6" fill="#f7f7f7" stroke="#555" stroke-width="1.2"/></svg>
<svg style="position:absolute;left:115px;top:405px" width="26" height="26" viewBox="0 0 26 26" ><circle cx="12" cy="12" r="11" stroke="#555" stroke-width="1" fill="none"/><path d="M14.3 11.5 L23 8.6" stroke="#3b0a78" stroke-width="2"/></svg>
<div style="position:absolute;left:138px;top:421.5px;font-size:8px;line-height:8px;color:#666;font-weight:normal;white-space:nowrap;">Vol</div>
<svg style="position:absolute;left:171px;top:408px" width="18" height="16" viewBox="0 0 18 16" ><path d="M3 12 V8.5 A6 6 0 0 1 15 8.5 V12" stroke="#555" stroke-width="1.6" fill="none"/><ellipse cx="2.9" cy="12.6" rx="1.9" ry="2.7" fill="#555"/><ellipse cx="15.1" cy="12.6" rx="1.9" ry="2.7" fill="#555"/></svg>
<svg style="position:absolute;left:204px;top:408px" width="18" height="16" viewBox="0 0 18 16" ><path d="M1.7 5.2 H4.5 L8.8 1.2 V14.6 L4.5 10.6 H1.7 Z" stroke="#555" stroke-width="1.5" fill="none" stroke-linejoin="round"/><path d="M11.3 4.6 L16.3 9.6 M16.3 4.6 L11.3 9.6" stroke="#555" stroke-width="1.6"/></svg>
<div class="abs" style="left:10px;top:450px;width:34px;height:34px;border-radius:17px;background:#fff;border:1px solid #cfcfcf"></div>
<svg style="position:absolute;left:18px;top:459px" width="18" height="17" viewBox="0 0 18 17" ><rect x="1" y="5" width="2" height="6" fill="#333"/><rect x="4.5" y="6.5" width="1.5" height="3" fill="#333"/><rect x="8" y="3" width="2" height="10" fill="#333"/><rect x="12" y="0" width="2" height="16" fill="#333"/><rect x="15.3" y="5.5" width="2" height="5" fill="#333"/></svg>
<div style="position:absolute;left:54px;top:444px;font-size:11.5px;line-height:11.5px;color:#333;font-weight:normal;white-space:nowrap;">Jolt - Castle (Syn...</div>
<svg style="position:absolute;left:205px;top:445px" width="18" height="6" viewBox="0 0 18 6" ><circle cx="3.5" cy="2.9" r="1.95" fill="#3b0a78"/><circle cx="9.1" cy="2.9" r="1.95" fill="#3b0a78"/><circle cx="14.7" cy="2.9" r="1.95" fill="#3b0a78"/></svg>
<div class="abs" style="left:54px;top:471px;width:18px;height:18px;border-radius:4px;background:#dadada"></div>
<div style="position:absolute;left:59px;top:476px;font-size:11.5px;line-height:11.5px;color:#555;font-weight:normal;white-space:nowrap;-webkit-text-stroke:0.4px #555">R</div>
<svg style="position:absolute;left:87px;top:472px" width="17" height="17" viewBox="0 0 17 17" ><path d="M6.5 2.5 L2.5 9 M6.5 2.5 L11.5 14 L14 7" stroke="#555" stroke-width="1.3" fill="none"/><circle cx="6.5" cy="2.5" r="1.6" fill="#f7f7f7" stroke="#555" stroke-width="1.2"/><circle cx="2.5" cy="9" r="1.6" fill="#f7f7f7" stroke="#555" stroke-width="1.2"/><circle cx="11.5" cy="14" r="1.6" fill="#f7f7f7" stroke="#555" stroke-width="1.2"/><circle cx="14" cy="7" r="1.6" fill="#f7f7f7" stroke="#555" stroke-width="1.2"/></svg>
<svg style="position:absolute;left:115px;top:469px" width="26" height="26" viewBox="0 0 26 26" ><circle cx="12" cy="12" r="11" stroke="#555" stroke-width="1" fill="none"/><path d="M14.3 11.5 L23 8.6" stroke="#3b0a78" stroke-width="2"/></svg>
<div style="position:absolute;left:138px;top:485.5px;font-size:8px;line-height:8px;color:#666;font-weight:normal;white-space:nowrap;">Vol</div>
<svg style="position:absolute;left:171px;top:472px" width="18" height="16" viewBox="0 0 18 16" ><path d="M3 12 V8.5 A6 6 0 0 1 15 8.5 V12" stroke="#555" stroke-width="1.6" fill="none"/><ellipse cx="2.9" cy="12.6" rx="1.9" ry="2.7" fill="#555"/><ellipse cx="15.1" cy="12.6" rx="1.9" ry="2.7" fill="#555"/></svg>
<svg style="position:absolute;left:204px;top:472px" width="18" height="16" viewBox="0 0 18 16" ><path d="M1.7 5.2 H4.5 L8.8 1.2 V14.6 L4.5 10.6 H1.7 Z" stroke="#555" stroke-width="1.5" fill="none" stroke-linejoin="round"/><path d="M11.3 4.6 L16.3 9.6 M16.3 4.6 L11.3 9.6" stroke="#555" stroke-width="1.6"/></svg>
<div class="abs" style="left:10px;top:514px;width:34px;height:34px;border-radius:17px;background:#fff;border:1px solid #cfcfcf"></div>
<svg style="position:absolute;left:18px;top:523px" width="18" height="17" viewBox="0 0 18 17" ><rect x="1" y="5" width="2" height="6" fill="#333"/><rect x="4.5" y="6.5" width="1.5" height="3" fill="#333"/><rect x="8" y="3" width="2" height="10" fill="#333"/><rect x="12" y="0" width="2" height="16" fill="#333"/><rect x="15.3" y="5.5" width="2" height="5" fill="#333"/></svg>
<div style="position:absolute;left:54px;top:508px;font-size:11.5px;line-height:11.5px;color:#333;font-weight:normal;white-space:nowrap;">Jolt - Castle (Syn...</div>
<svg style="position:absolute;left:205px;top:509px" width="18" height="6" viewBox="0 0 18 6" ><circle cx="3.5" cy="2.9" r="1.95" fill="#3b0a78"/><circle cx="9.1" cy="2.9" r="1.95" fill="#3b0a78"/><circle cx="14.7" cy="2.9" r="1.95" fill="#3b0a78"/></svg>
<div class="abs" style="left:54px;top:535px;width:18px;height:18px;border-radius:4px;background:#dadada"></div>
<div style="position:absolute;left:59px;top:540px;font-size:11.5px;line-height:11.5px;color:#555;font-weight:normal;white-space:nowrap;-webkit-text-stroke:0.4px #555">R</div>
<svg style="position:absolute;left:87px;top:536px" width="17" height="17" viewBox="0 0 17 17" ><path d="M6.5 2.5 L2.5 9 M6.5 2.5 L11.5 14 L14 7" stroke="#555" stroke-width="1.3" fill="none"/><circle cx="6.5" cy="2.5" r="1.6" fill="#f7f7f7" stroke="#555" stroke-width="1.2"/><circle cx="2.5" cy="9" r="1.6" fill="#f7f7f7" stroke="#555" stroke-width="1.2"/><circle cx="11.5" cy="14" r="1.6" fill="#f7f7f7" stroke="#555" stroke-width="1.2"/><circle cx="14" cy="7" r="1.6" fill="#f7f7f7" stroke="#555" stroke-width="1.2"/></svg>
<svg style="position:absolute;left:115px;top:533px" width="26" height="26" viewBox="0 0 26 26" ><circle cx="12" cy="12" r="11" stroke="#555" stroke-width="1" fill="none"/><path d="M14.3 11.5 L23 8.6" stroke="#3b0a78" stroke-width="2"/></svg>
<div style="position:absolute;left:138px;top:549.5px;font-size:8px;line-height:8px;color:#666;font-weight:normal;white-space:nowrap;">Vol</div>
<svg style="position:absolute;left:171px;top:536px" width="18" height="16" viewBox="0 0 18 16" ><path d="M3 12 V8.5 A6 6 0 0 1 15 8.5 V12" stroke="#555" stroke-width="1.6" fill="none"/><ellipse cx="2.9" cy="12.6" rx="1.9" ry="2.7" fill="#555"/><ellipse cx="15.1" cy="12.6" rx="1.9" ry="2.7" fill="#555"/></svg>
<svg style="position:absolute;left:204px;top:536px" width="18" height="16" viewBox="0 0 18 16" ><path d="M1.7 5.2 H4.5 L8.8 1.2 V14.6 L4.5 10.6 H1.7 Z" stroke="#555" stroke-width="1.5" fill="none" stroke-linejoin="round"/><path d="M11.3 4.6 L16.3 9.6 M16.3 4.6 L11.3 9.6" stroke="#555" stroke-width="1.6"/></svg>
<div class="abs" style="left:10px;top:578px;width:34px;height:34px;border-radius:17px;background:#fff;border:1px solid #cfcfcf"></div>
<svg style="position:absolute;left:18px;top:587px" width="18" height="17" viewBox="0 0 18 17" ><rect x="1" y="5" width="2" height="6" fill="#333"/><rect x="4.5" y="6.5" width="1.5" height="3" fill="#333"/><rect x="8" y="3" width="2" height="10" fill="#333"/><rect x="12" y="0" width="2" height="16" fill="#333"/><rect x="15.3" y="5.5" width="2" height="5" fill="#333"/></svg>
<div style="position:absolute;left:54px;top:572px;font-size:11.5px;line-height:11.5px;color:#333;font-weight:normal;white-space:nowrap;">Jolt - Castle (Syn...</div>
<svg style="position:absolute;left:205px;top:573px" width="18" height="6" viewBox="0 0 18 6" ><circle cx="3.5" cy="2.9" r="1.95" fill="#3b0a78"/><circle cx="9.1" cy="2.9" r="1.95" fill="#3b0a78"/><circle cx="14.7" cy="2.9" r="1.95" fill="#3b0a78"/></svg>
<div class="abs" style="left:54px;top:599px;width:18px;height:18px;border-radius:4px;background:#dadada"></div>
<div style="position:absolute;left:59px;top:604px;font-size:11.5px;line-height:11.5px;color:#555;font-weight:normal;white-space:nowrap;-webkit-text-stroke:0.4px #555">R</div>
<svg style="position:absolute;left:87px;top:600px" width="17" height="17" viewBox="0 0 17 17" ><path d="M6.5 2.5 L2.5 9 M6.5 2.5 L11.5 14 L14 7" stroke="#555" stroke-width="1.3" fill="none"/><circle cx="6.5" cy="2.5" r="1.6" fill="#f7f7f7" stroke="#555" stroke-width="1.2"/><circle cx="2.5" cy="9" r="1.6" fill="#f7f7f7" stroke="#555" stroke-width="1.2"/><circle cx="11.5" cy="14" r="1.6" fill="#f7f7f7" stroke="#555" stroke-width="1.2"/><circle cx="14" cy="7" r="1.6" fill="#f7f7f7" stroke="#555" stroke-width="1.2"/></svg>
<svg style="position:absolute;left:115px;top:597px" width="26" height="26" viewBox="0 0 26 26" ><circle cx="12" cy="12" r="11" stroke="#555" stroke-width="1" fill="none"/><path d="M14.3 11.5 L23 8.6" stroke="#3b0a78" stroke-width="2"/></svg>
<div style="position:absolute;left:138px;top:613.5px;font-size:8px;line-height:8px;color:#666;font-weight:normal;white-space:nowrap;">Vol</div>
<svg style="position:absolute;left:171px;top:600px" width="18" height="16" viewBox="0 0 18 16" ><path d="M3 12 V8.5 A6 6 0 0 1 15 8.5 V12" stroke="#555" stroke-width="1.6" fill="none"/><ellipse cx="2.9" cy="12.6" rx="1.9" ry="2.7" fill="#555"/><ellipse cx="15.1" cy="12.6" rx="1.9" ry="2.7" fill="#555"/></svg>
<svg style="position:absolute;left:204px;top:600px" width="18" height="16" viewBox="0 0 18 16" ><path d="M1.7 5.2 H4.5 L8.8 1.2 V14.6 L4.5 10.6 H1.7 Z" stroke="#555" stroke-width="1.5" fill="none" stroke-linejoin="round"/><path d="M11.3 4.6 L16.3 9.6 M16.3 4.6 L11.3 9.6" stroke="#555" stroke-width="1.6"/></svg>
<div class="abs" style="left:10px;top:642px;width:34px;height:34px;border-radius:17px;background:#fff;border:1px solid #cfcfcf"></div>
<svg style="position:absolute;left:18px;top:651px" width="18" height="17" viewBox="0 0 18 17" ><rect x="1" y="5" width="2" height="6" fill="#333"/><rect x="4.5" y="6.5" width="1.5" height="3" fill="#333"/><rect x="8" y="3" width="2" height="10" fill="#333"/><rect x="12" y="0" width="2" height="16" fill="#333"/><rect x="15.3" y="5.5" width="2" height="5" fill="#333"/></svg>
<div style="position:absolute;left:54px;top:636px;font-size:11.5px;line-height:11.5px;color:#333;font-weight:normal;white-space:nowrap;">Jolt - Life (Bass F...</div>
<svg style="position:absolute;left:205px;top:637px" width="18" height="6" viewBox="0 0 18 6" ><circle cx="3.5" cy="2.9" r="1.95" fill="#3b0a78"/><circle cx="9.1" cy="2.9" r="1.95" fill="#3b0a78"/><circle cx="14.7" cy="2.9" r="1.95" fill="#3b0a78"/></svg>
<div class="abs" style="left:54px;top:663px;width:18px;height:18px;border-radius:4px;background:#dadada"></div>
<div style="position:absolute;left:59px;top:668px;font-size:11.5px;line-height:11.5px;color:#555;font-weight:normal;white-space:nowrap;-webkit-text-stroke:0.4px #555">R</div>
<svg style="position:absolute;left:87px;top:664px" width="17" height="17" viewBox="0 0 17 17" ><path d="M6.5 2.5 L2.5 9 M6.5 2.5 L11.5 14 L14 7" stroke="#555" stroke-width="1.3" fill="none"/><circle cx="6.5" cy="2.5" r="1.6" fill="#f7f7f7" stroke="#555" stroke-width="1.2"/><circle cx="2.5" cy="9" r="1.6" fill="#f7f7f7" stroke="#555" stroke-width="1.2"/><circle cx="11.5" cy="14" r="1.6" fill="#f7f7f7" stroke="#555" stroke-width="1.2"/><circle cx="14" cy="7" r="1.6" fill="#f7f7f7" stroke="#555" stroke-width="1.2"/></svg>
<svg style="position:absolute;left:115px;top:661px" width="26" height="26" viewBox="0 0 26 26" ><circle cx="12" cy="12" r="11" stroke="#555" stroke-width="1" fill="none"/><path d="M14.3 11.5 L23 8.6" stroke="#3b0a78" stroke-width="2"/></svg>
<div style="position:absolute;left:138px;top:677.5px;font-size:8px;line-height:8px;color:#666;font-weight:normal;white-space:nowrap;">Vol</div>
<svg style="position:absolute;left:171px;top:664px" width="18" height="16" viewBox="0 0 18 16" ><path d="M3 12 V8.5 A6 6 0 0 1 15 8.5 V12" stroke="#555" stroke-width="1.6" fill="none"/><ellipse cx="2.9" cy="12.6" rx="1.9" ry="2.7" fill="#555"/><ellipse cx="15.1" cy="12.6" rx="1.9" ry="2.7" fill="#555"/></svg>
<svg style="position:absolute;left:204px;top:664px" width="18" height="16" viewBox="0 0 18 16" ><path d="M1.7 5.2 H4.5 L8.8 1.2 V14.6 L4.5 10.6 H1.7 Z" stroke="#555" stroke-width="1.5" fill="none" stroke-linejoin="round"/><path d="M11.3 4.6 L16.3 9.6 M16.3 4.6 L11.3 9.6" stroke="#555" stroke-width="1.6"/></svg>
<div class="abs" style="left:234px;top:245px;width:128px;height:59px;border-radius:7px;background:#b8142c;overflow:hidden"><svg width="128" height="59" style="position:absolute;left:0;top:0"><rect x="2.75" y="26.5" width="2" height="8.4" rx="1" fill="rgba(255,255,255,0.5)"/><rect x="6.75" y="19.4" width="2" height="22.7" rx="1" fill="rgba(255,255,255,0.5)"/><rect x="10.75" y="18.7" width="2" height="24.0" rx="1" fill="rgba(255,255,255,0.5)"/><rect x="14.75" y="18.2" width="2" height="25.0" rx="1" fill="rgba(255,255,255,0.5)"/><rect x="18.75" y="13.2" width="2" height="35.0" rx="1" fill="rgba(255,255,255,0.5)"/><rect x="22.75" y="20.4" width="2" height="20.7" rx="1" fill="rgba(255,255,255,0.5)"/><rect x="26.75" y="22.3" width="2" height="16.8" rx="1" fill="rgba(255,255,255,0.5)"/><rect x="30.75" y="22.3" width="2" height="16.8" rx="1" fill="rgba(255,255,255,0.5)"/><rect x="34.75" y="18.9" width="2" height="23.5" rx="1" fill="rgba(255,255,255,0.5)"/><rect x="38.75" y="18.9" width="2" height="23.5" rx="1" fill="rgba(255,255,255,0.5)"/><rect x="42.75" y="16.5" width="2" height="28.3" rx="1" fill="rgba(255,255,255,0.5)"/><rect x="46.75" y="18.9" width="2" height="23.5" rx="1" fill="rgba(255,255,255,0.5)"/><rect x="50.75" y="20.4" width="2" height="20.7" rx="1" fill="rgba(255,255,255,0.5)"/><rect x="54.75" y="18.7" width="2" height="24.0" rx="1" fill="rgba(255,255,255,0.5)"/><rect x="58.75" y="21.7" width="2" height="18.0" rx="1" fill="rgba(255,255,255,0.5)"/><rect x="62.75" y="21.7" width="2" height="18.0" rx="1" fill="rgba(255,255,255,0.5)"/><rect x="66.75" y="20.4" width="2" height="20.7" rx="1" fill="rgba(255,255,255,0.5)"/><rect x="70.75" y="16.7" width="2" height="28.0" rx="1" fill="rgba(255,255,255,0.5)"/><rect x="74.75" y="14.4" width="2" height="32.5" rx="1" fill="rgba(255,255,255,0.5)"/><rect x="78.75" y="20.7" width="2" height="20.0" rx="1" fill="rgba(255,255,255,0.5)"/><rect x="82.75" y="16.7" width="2" height="28.0" rx="1" fill="rgba(255,255,255,0.5)"/><rect x="86.75" y="18.0" width="2" height="25.4" rx="1" fill="rgba(255,255,255,0.5)"/><rect x="90.75" y="18.9" width="2" height="23.5" rx="1" fill="rgba(255,255,255,0.5)"/><rect x="94.75" y="19.5" width="2" height="22.4" rx="1" fill="rgba(255,255,255,0.5)"/><rect x="98.75" y="18.7" width="2" height="24.0" rx="1" fill="rgba(255,255,255,0.5)"/><rect x="102.75" y="22.7" width="2" height="16.0" rx="1" fill="rgba(255,255,255,0.5)"/><rect x="106.75" y="17.7" width="2" height="26.0" rx="1" fill="rgba(255,255,255,0.5)"/><rect x="110.75" y="23.5" width="2" height="14.3" rx="1" fill="rgba(255,255,255,0.5)"/><rect x="114.75" y="20.4" width="2" height="20.7" rx="1" fill="rgba(255,255,255,0.5)"/><rect x="118.75" y="17.3" width="2" height="26.8" rx="1" fill="rgba(255,255,255,0.5)"/><rect x="122.75" y="19.4" width="2" height="22.7" rx="1" fill="rgba(255,255,255,0.5)"/></svg></div>
<div class="abs" style="left:362px;top:245px;width:128px;height:59px;border-radius:7px;background:#b8142c;overflow:hidden"><svg width="128" height="59" style="position:absolute;left:0;top:0"><rect x="2.75" y="26.5" width="2" height="8.4" rx="1" fill="rgba(255,255,255,0.5)"/><rect x="6.75" y="19.4" width="2" height="22.7" rx="1" fill="rgba(255,255,255,0.5)"/><rect x="10.75" y="18.7" width="2" height="24.0" rx="1" fill="rgba(255,255,255,0.5)"/><rect x="14.75" y="18.2" width="2" height="25.0" rx="1" fill="rgba(255,255,255,0.5)"/><rect x="18.75" y="13.2" width="2" height="35.0" rx="1" fill="rgba(255,255,255,0.5)"/><rect x="22.75" y="20.4" width="2" height="20.7" rx="1" fill="rgba(255,255,255,0.5)"/><rect x="26.75" y="22.3" width="2" height="16.8" rx="1" fill="rgba(255,255,255,0.5)"/><rect x="30.75" y="22.3" width="2" height="16.8" rx="1" fill="rgba(255,255,255,0.5)"/><rect x="34.75" y="18.9" width="2" height="23.5" rx="1" fill="rgba(255,255,255,0.5)"/><rect x="38.75" y="18.9" width="2" height="23.5" rx="1" fill="rgba(255,255,255,0.5)"/><rect x="42.75" y="16.5" width="2" height="28.3" rx="1" fill="rgba(255,255,255,0.5)"/><rect x="46.75" y="18.9" width="2" height="23.5" rx="1" fill="rgba(255,255,255,0.5)"/><rect x="50.75" y="20.4" width="2" height="20.7" rx="1" fill="rgba(255,255,255,0.5)"/><rect x="54.75" y="18.7" width="2" height="24.0" rx="1" fill="rgba(255,255,255,0.5)"/><rect x="58.75" y="21.7" width="2" height="18.0" rx="1" fill="rgba(255,255,255,0.5)"/><rect x="62.75" y="21.7" width="2" height="18.0" rx="1" fill="rgba(255,255,255,0.5)"/><rect x="66.75" y="20.4" width="2" height="20.7" rx="1" fill="rgba(255,255,255,0.5)"/><rect x="70.75" y="16.7" width="2" height="28.0" rx="1" fill="rgba(255,255,255,0.5)"/><rect x="74.75" y="14.4" width="2" height="32.5" rx="1" fill="rgba(255,255,255,0.5)"/><rect x="78.75" y="20.7" width="2" height="20.0" rx="1" fill="rgba(255,255,255,0.5)"/><rect x="82.75" y="16.7" width="2" height="28.0" rx="1" fill="rgba(255,255,255,0.5)"/><rect x="86.75" y="18.0" width="2" height="25.4" rx="1" fill="rgba(255,255,255,0.5)"/><rect x="90.75" y="18.9" width="2" height="23.5" rx="1" fill="rgba(255,255,255,0.5)"/><rect x="94.75" y="19.5" width="2" height="22.4" rx="1" fill="rgba(255,255,255,0.5)"/><rect x="98.75" y="18.7" width="2" height="24.0" rx="1" fill="rgba(255,255,255,0.5)"/><rect x="102.75" y="22.7" width="2" height="16.0" rx="1" fill="rgba(255,255,255,0.5)"/><rect x="106.75" y="17.7" width="2" height="26.0" rx="1" fill="rgba(255,255,255,0.5)"/><rect x="110.75" y="23.5" width="2" height="14.3" rx="1" fill="rgba(255,255,255,0.5)"/><rect x="114.75" y="20.4" width="2" height="20.7" rx="1" fill="rgba(255,255,255,0.5)"/><rect x="118.75" y="17.3" width="2" height="26.8" rx="1" fill="rgba(255,255,255,0.5)"/><rect x="122.75" y="19.4" width="2" height="22.7" rx="1" fill="rgba(255,255,255,0.5)"/></svg></div>
<div class="abs" style="left:490px;top:245px;width:128px;height:59px;border-radius:7px;background:#b8142c;overflow:hidden"><svg width="128" height="59" style="position:absolute;left:0;top:0"><rect x="2.75" y="26.5" width="2" height="8.4" rx="1" fill="rgba(255,255,255,0.5)"/><rect x="6.75" y="19.4" width="2" height="22.7" rx="1" fill="rgba(255,255,255,0.5)"/><rect x="10.75" y="18.7" width="2" height="24.0" rx="1" fill="rgba(255,255,255,0.5)"/><rect x="14.75" y="18.2" width="2" height="25.0" rx="1" fill="rgba(255,255,255,0.5)"/><rect x="18.75" y="13.2" width="2" height="35.0" rx="1" fill="rgba(255,255,255,0.5)"/><rect x="22.75" y="20.4" width="2" height="20.7" rx="1" fill="rgba(255,255,255,0.5)"/><rect x="26.75" y="22.3" width="2" height="16.8" rx="1" fill="rgba(255,255,255,0.5)"/><rect x="30.75" y="22.3" width="2" height="16.8" rx="1" fill="rgba(255,255,255,0.5)"/><rect x="34.75" y="18.9" width="2" height="23.5" rx="1" fill="rgba(255,255,255,0.5)"/><rect x="38.75" y="18.9" width="2" height="23.5" rx="1" fill="rgba(255,255,255,0.5)"/><rect x="42.75" y="16.5" width="2" height="28.3" rx="1" fill="rgba(255,255,255,0.5)"/><rect x="46.75" y="18.9" width="2" height="23.5" rx="1" fill="rgba(255,255,255,0.5)"/><rect x="50.75" y="20.4" width="2" height="20.7" rx="1" fill="rgba(255,255,255,0.5)"/><rect x="54.75" y="18.7" width="2" height="24.0" rx="1" fill="rgba(255,255,255,0.5)"/><rect x="58.75" y="21.7" width="2" height="18.0" rx="1" fill="rgba(255,255,255,0.5)"/><rect x="62.75" y="21.7" width="2" height="18.0" rx="1" fill="rgba(255,255,255,0.5)"/><rect x="66.75" y="20.4" width="2" height="20.7" rx="1" fill="rgba(255,255,255,0.5)"/><rect x="70.75" y="16.7" width="2" height="28.0" rx="1" fill="rgba(255,255,255,0.5)"/><rect x="74.75" y="14.4" width="2" height="32.5" rx="1" fill="rgba(255,255,255,0.5)"/><rect x="78.75" y="20.7" width="2" height="20.0" rx="1" fill="rgba(255,255,255,0.5)"/><rect x="82.75" y="16.7" width="2" height="28.0" rx="1" fill="rgba(255,255,255,0.5)"/><rect x="86.75" y="18.0" width="2" height="25.4" rx="1" fill="rgba(255,255,255,0.5)"/><rect x="90.75" y="18.9" width="2" height="23.5" rx="1" fill="rgba(255,255,255,0.5)"/><rect x="94.75" y="19.5" width="2" height="22.4" rx="1" fill="rgba(255,255,255,0.5)"/><rect x="98.75" y="18.7" width="2" height="24.0" rx="1" fill="rgba(255,255,255,0.5)"/><rect x="102.75" y="22.7" width="2" height="16.0" rx="1" fill="rgba(255,255,255,0.5)"/><rect x="106.75" y="17.7" width="2" height="26.0" rx="1" fill="rgba(255,255,255,0.5)"/><rect x="110.75" y="23.5" width="2" height="14.3" rx="1" fill="rgba(255,255,255,0.5)"/><rect x="114.75" y="20.4" width="2" height="20.7" rx="1" fill="rgba(255,255,255,0.5)"/><rect x="118.75" y="17.3" width="2" height="26.8" rx="1" fill="rgba(255,255,255,0.5)"/><rect x="122.75" y="19.4" width="2" height="22.7" rx="1" fill="rgba(255,255,255,0.5)"/></svg></div>
<div class="abs" style="left:618px;top:245px;width:127px;height:59px;border-radius:7px;background:#b8142c;overflow:hidden"><svg width="127" height="59" style="position:absolute;left:0;top:0"><rect x="2.75" y="26.5" width="2" height="8.4" rx="1" fill="rgba(255,255,255,0.5)"/><rect x="6.75" y="19.4" width="2" height="22.7" rx="1" fill="rgba(255,255,255,0.5)"/><rect x="10.75" y="18.7" width="2" height="24.0" rx="1" fill="rgba(255,255,255,0.5)"/><rect x="14.75" y="18.2" width="2" height="25.0" rx="1" fill="rgba(255,255,255,0.5)"/><rect x="18.75" y="13.2" width="2" height="35.0" rx="1" fill="rgba(255,255,255,0.5)"/><rect x="22.75" y="20.4" width="2" height="20.7" rx="1" fill="rgba(255,255,255,0.5)"/><rect x="26.75" y="22.3" width="2" height="16.8" rx="1" fill="rgba(255,255,255,0.5)"/><rect x="30.75" y="22.3" width="2" height="16.8" rx="1" fill="rgba(255,255,255,0.5)"/><rect x="34.75" y="18.9" width="2" height="23.5" rx="1" fill="rgba(255,255,255,0.5)"/><rect x="38.75" y="18.9" width="2" height="23.5" rx="1" fill="rgba(255,255,255,0.5)"/><rect x="42.75" y="16.5" width="2" height="28.3" rx="1" fill="rgba(255,255,255,0.5)"/><rect x="46.75" y="18.9" width="2" height="23.5" rx="1" fill="rgba(255,255,255,0.5)"/><rect x="50.75" y="20.4" width="2" height="20.7" rx="1" fill="rgba(255,255,255,0.5)"/><rect x="54.75" y="18.7" width="2" height="24.0" rx="1" fill="rgba(255,255,255,0.5)"/><rect x="58.75" y="21.7" width="2" height="18.0" rx="1" fill="rgba(255,255,255,0.5)"/><rect x="62.75" y="21.7" width="2" height="18.0" rx="1" fill="rgba(255,255,255,0.5)"/><rect x="66.75" y="20.4" width="2" height="20.7" rx="1" fill="rgba(255,255,255,0.5)"/><rect x="70.75" y="16.7" width="2" height="28.0" rx="1" fill="rgba(255,255,255,0.5)"/><rect x="74.75" y="14.4" width="2" height="32.5" rx="1" fill="rgba(255,255,255,0.5)"/><rect x="78.75" y="20.7" width="2" height="20.0" rx="1" fill="rgba(255,255,255,0.5)"/><rect x="82.75" y="16.7" width="2" height="28.0" rx="1" fill="rgba(255,255,255,0.5)"/><rect x="86.75" y="18.0" width="2" height="25.4" rx="1" fill="rgba(255,255,255,0.5)"/><rect x="90.75" y="18.9" width="2" height="23.5" rx="1" fill="rgba(255,255,255,0.5)"/><rect x="94.75" y="19.5" width="2" height="22.4" rx="1" fill="rgba(255,255,255,0.5)"/><rect x="98.75" y="18.7" width="2" height="24.0" rx="1" fill="rgba(255,255,255,0.5)"/><rect x="102.75" y="22.7" width="2" height="16.0" rx="1" fill="rgba(255,255,255,0.5)"/><rect x="106.75" y="17.7" width="2" height="26.0" rx="1" fill="rgba(255,255,255,0.5)"/><rect x="110.75" y="23.5" width="2" height="14.3" rx="1" fill="rgba(255,255,255,0.5)"/><rect x="114.75" y="20.4" width="2" height="20.7" rx="1" fill="rgba(255,255,255,0.5)"/><rect x="118.75" y="17.3" width="2" height="26.8" rx="1" fill="rgba(255,255,255,0.5)"/><rect x="122.75" y="19.4" width="2" height="22.7" rx="1" fill="rgba(255,255,255,0.5)"/></svg></div>
<div class="abs" style="left:745px;top:245px;width:127px;height:59px;border-radius:7px;background:#b8142c;overflow:hidden"><svg width="127" height="59" style="position:absolute;left:0;top:0"><rect x="2.75" y="26.5" width="2" height="8.4" rx="1" fill="rgba(255,255,255,0.5)"/><rect x="6.75" y="19.4" width="2" height="22.7" rx="1" fill="rgba(255,255,255,0.5)"/><rect x="10.75" y="18.7" width="2" height="24.0" rx="1" fill="rgba(255,255,255,0.5)"/><rect x="14.75" y="18.2" width="2" height="25.0" rx="1" fill="rgba(255,255,255,0.5)"/><rect x="18.75" y="13.2" width="2" height="35.0" rx="1" fill="rgba(255,255,255,0.5)"/><rect x="22.75" y="20.4" width="2" height="20.7" rx="1" fill="rgba(255,255,255,0.5)"/><rect x="26.75" y="22.3" width="2" height="16.8" rx="1" fill="rgba(255,255,255,0.5)"/><rect x="30.75" y="22.3" width="2" height="16.8" rx="1" fill="rgba(255,255,255,0.5)"/><rect x="34.75" y="18.9" width="2" height="23.5" rx="1" fill="rgba(255,255,255,0.5)"/><rect x="38.75" y="18.9" width="2" height="23.5" rx="1" fill="rgba(255,255,255,0.5)"/><rect x="42.75" y="16.5" width="2" height="28.3" rx="1" fill="rgba(255,255,255,0.5)"/><rect x="46.75" y="18.9" width="2" height="23.5" rx="1" fill="rgba(255,255,255,0.5)"/><rect x="50.75" y="20.4" width="2" height="20.7" rx="1" fill="rgba(255,255,255,0.5)"/><rect x="54.75" y="18.7" width="2" height="24.0" rx="1" fill="rgba(255,255,255,0.5)"/><rect x="58.75" y="21.7" width="2" height="18.0" rx="1" fill="rgba(255,255,255,0.5)"/><rect x="62.75" y="21.7" width="2" height="18.0" rx="1" fill="rgba(255,255,255,0.5)"/><rect x="66.75" y="20.4" width="2" height="20.7" rx="1" fill="rgba(255,255,255,0.5)"/><rect x="70.75" y="16.7" width="2" height="28.0" rx="1" fill="rgba(255,255,255,0.5)"/><rect x="74.75" y="14.4" width="2" height="32.5" rx="1" fill="rgba(255,255,255,0.5)"/><rect x="78.75" y="20.7" width="2" height="20.0" rx="1" fill="rgba(255,255,255,0.5)"/><rect x="82.75" y="16.7" width="2" height="28.0" rx="1" fill="rgba(255,255,255,0.5)"/><rect x="86.75" y="18.0" width="2" height="25.4" rx="1" fill="rgba(255,255,255,0.5)"/><rect x="90.75" y="18.9" width="2" height="23.5" rx="1" fill="rgba(255,255,255,0.5)"/><rect x="94.75" y="19.5" width="2" height="22.4" rx="1" fill="rgba(255,255,255,0.5)"/><rect x="98.75" y="18.7" width="2" height="24.0" rx="1" fill="rgba(255,255,255,0.5)"/><rect x="102.75" y="22.7" width="2" height="16.0" rx="1" fill="rgba(255,255,255,0.5)"/><rect x="106.75" y="17.7" width="2" height="26.0" rx="1" fill="rgba(255,255,255,0.5)"/><rect x="110.75" y="23.5" width="2" height="14.3" rx="1" fill="rgba(255,255,255,0.5)"/><rect x="114.75" y="20.4" width="2" height="20.7" rx="1" fill="rgba(255,255,255,0.5)"/><rect x="118.75" y="17.3" width="2" height="26.8" rx="1" fill="rgba(255,255,255,0.5)"/><rect x="122.75" y="19.4" width="2" height="22.7" rx="1" fill="rgba(255,255,255,0.5)"/></svg></div>
<div class="abs" style="left:362px;top:309px;width:128px;height:59px;border-radius:7px;background:#ab216a;overflow:hidden"><svg width="128" height="59" style="position:absolute;left:0;top:0"><rect x="2.75" y="15.4" width="2" height="30.6" rx="1" fill="rgba(255,255,255,0.5)"/><rect x="6.75" y="16.3" width="2" height="28.8" rx="1" fill="rgba(255,255,255,0.5)"/><rect x="10.75" y="17.3" width="2" height="26.8" rx="1" fill="rgba(255,255,255,0.5)"/><rect x="14.75" y="23.0" width="2" height="15.3" rx="1" fill="rgba(255,255,255,0.5)"/><rect x="18.75" y="16.9" width="2" height="27.6" rx="1" fill="rgba(255,255,255,0.5)"/><rect x="22.75" y="13.7" width="2" height="34.0" rx="1" fill="rgba(255,255,255,0.5)"/><rect x="26.75" y="20.4" width="2" height="20.7" rx="1" fill="rgba(255,255,255,0.5)"/><rect x="30.75" y="15.3" width="2" height="30.8" rx="1" fill="rgba(255,255,255,0.5)"/><rect x="34.75" y="22.5" width="2" height="16.3" rx="1" fill="rgba(255,255,255,0.5)"/><rect x="38.75" y="18.6" width="2" height="24.2" rx="1" fill="rgba(255,255,255,0.5)"/><rect x="42.75" y="19.1" width="2" height="23.2" rx="1" fill="rgba(255,255,255,0.5)"/><rect x="46.75" y="22.5" width="2" height="16.3" rx="1" fill="rgba(255,255,255,0.5)"/><rect x="50.75" y="20.6" width="2" height="20.2" rx="1" fill="rgba(255,255,255,0.5)"/><rect x="54.75" y="14.3" width="2" height="32.8" rx="1" fill="rgba(255,255,255,0.5)"/><rect x="58.75" y="22.0" width="2" height="17.3" rx="1" fill="rgba(255,255,255,0.5)"/><rect x="62.75" y="16.6" width="2" height="28.1" rx="1" fill="rgba(255,255,255,0.5)"/><rect x="66.75" y="19.6" width="2" height="22.2" rx="1" fill="rgba(255,255,255,0.5)"/><rect x="70.75" y="19.1" width="2" height="23.2" rx="1" fill="rgba(255,255,255,0.5)"/><rect x="74.75" y="16.9" width="2" height="27.6" rx="1" fill="rgba(255,255,255,0.5)"/><rect x="78.75" y="17.4" width="2" height="26.6" rx="1" fill="rgba(255,255,255,0.5)"/><rect x="82.75" y="22.5" width="2" height="16.3" rx="1" fill="rgba(255,255,255,0.5)"/><rect x="86.75" y="20.4" width="2" height="20.7" rx="1" fill="rgba(255,255,255,0.5)"/><rect x="90.75" y="16.9" width="2" height="27.6" rx="1" fill="rgba(255,255,255,0.5)"/><rect x="94.75" y="20.7" width="2" height="20.0" rx="1" fill="rgba(255,255,255,0.5)"/><rect x="98.75" y="20.4" width="2" height="20.7" rx="1" fill="rgba(255,255,255,0.5)"/><rect x="102.75" y="18.9" width="2" height="23.7" rx="1" fill="rgba(255,255,255,0.5)"/><rect x="106.75" y="20.0" width="2" height="21.4" rx="1" fill="rgba(255,255,255,0.5)"/><rect x="110.75" y="20.6" width="2" height="20.2" rx="1" fill="rgba(255,255,255,0.5)"/><rect x="114.75" y="18.4" width="2" height="24.7" rx="1" fill="rgba(255,255,255,0.5)"/><rect x="118.75" y="17.4" width="2" height="26.5" rx="1" fill="rgba(255,255,255,0.5)"/><rect x="122.75" y="19.5" width="2" height="22.4" rx="1" fill="rgba(255,255,255,0.5)"/></svg></div>
<div class="abs" style="left:490px;top:309px;width:128px;height:59px;border-radius:7px;background:#ab216a;overflow:hidden"><svg width="128" height="59" style="position:absolute;left:0;top:0"><rect x="2.75" y="15.4" width="2" height="30.6" rx="1" fill="rgba(255,255,255,0.5)"/><rect x="6.75" y="16.3" width="2" height="28.8" rx="1" fill="rgba(255,255,255,0.5)"/><rect x="10.75" y="17.3" width="2" height="26.8" rx="1" fill="rgba(255,255,255,0.5)"/><rect x="14.75" y="23.0" width="2" height="15.3" rx="1" fill="rgba(255,255,255,0.5)"/><rect x="18.75" y="16.9" width="2" height="27.6" rx="1" fill="rgba(255,255,255,0.5)"/><rect x="22.75" y="13.7" width="2" height="34.0" rx="1" fill="rgba(255,255,255,0.5)"/><rect x="26.75" y="20.4" width="2" height="20.7" rx="1" fill="rgba(255,255,255,0.5)"/><rect x="30.75" y="15.3" width="2" height="30.8" rx="1" fill="rgba(255,255,255,0.5)"/><rect x="34.75" y="22.5" width="2" height="16.3" rx="1" fill="rgba(255,255,255,0.5)"/><rect x="38.75" y="18.6" width="2" height="24.2" rx="1" fill="rgba(255,255,255,0.5)"/><rect x="42.75" y="19.1" width="2" height="23.2" rx="1" fill="rgba(255,255,255,0.5)"/><rect x="46.75" y="22.5" width="2" height="16.3" rx="1" fill="rgba(255,255,255,0.5)"/><rect x="50.75" y="20.6" width="2" height="20.2" rx="1" fill="rgba(255,255,255,0.5)"/><rect x="54.75" y="14.3" width="2" height="32.8" rx="1" fill="rgba(255,255,255,0.5)"/><rect x="58.75" y="22.0" width="2" height="17.3" rx="1" fill="rgba(255,255,255,0.5)"/><rect x="62.75" y="16.6" width="2" height="28.1" rx="1" fill="rgba(255,255,255,0.5)"/><rect x="66.75" y="19.6" width="2" height="22.2" rx="1" fill="rgba(255,255,255,0.5)"/><rect x="70.75" y="19.1" width="2" height="23.2" rx="1" fill="rgba(255,255,255,0.5)"/><rect x="74.75" y="16.9" width="2" height="27.6" rx="1" fill="rgba(255,255,255,0.5)"/><rect x="78.75" y="17.4" width="2" height="26.6" rx="1" fill="rgba(255,255,255,0.5)"/><rect x="82.75" y="22.5" width="2" height="16.3" rx="1" fill="rgba(255,255,255,0.5)"/><rect x="86.75" y="20.4" width="2" height="20.7" rx="1" fill="rgba(255,255,255,0.5)"/><rect x="90.75" y="16.9" width="2" height="27.6" rx="1" fill="rgba(255,255,255,0.5)"/><rect x="94.75" y="20.7" width="2" height="20.0" rx="1" fill="rgba(255,255,255,0.5)"/><rect x="98.75" y="20.4" width="2" height="20.7" rx="1" fill="rgba(255,255,255,0.5)"/><rect x="102.75" y="18.9" width="2" height="23.7" rx="1" fill="rgba(255,255,255,0.5)"/><rect x="106.75" y="20.0" width="2" height="21.4" rx="1" fill="rgba(255,255,255,0.5)"/><rect x="110.75" y="20.6" width="2" height="20.2" rx="1" fill="rgba(255,255,255,0.5)"/><rect x="114.75" y="18.4" width="2" height="24.7" rx="1" fill="rgba(255,255,255,0.5)"/><rect x="118.75" y="17.4" width="2" height="26.5" rx="1" fill="rgba(255,255,255,0.5)"/><rect x="122.75" y="19.5" width="2" height="22.4" rx="1" fill="rgba(255,255,255,0.5)"/></svg></div>
<div class="abs" style="left:618px;top:309px;width:127px;height:59px;border-radius:7px;background:#ab216a;overflow:hidden"><svg width="127" height="59" style="position:absolute;left:0;top:0"><rect x="2.75" y="15.4" width="2" height="30.6" rx="1" fill="rgba(255,255,255,0.5)"/><rect x="6.75" y="16.3" width="2" height="28.8" rx="1" fill="rgba(255,255,255,0.5)"/><rect x="10.75" y="17.3" width="2" height="26.8" rx="1" fill="rgba(255,255,255,0.5)"/><rect x="14.75" y="23.0" width="2" height="15.3" rx="1" fill="rgba(255,255,255,0.5)"/><rect x="18.75" y="16.9" width="2" height="27.6" rx="1" fill="rgba(255,255,255,0.5)"/><rect x="22.75" y="13.7" width="2" height="34.0" rx="1" fill="rgba(255,255,255,0.5)"/><rect x="26.75" y="20.4" width="2" height="20.7" rx="1" fill="rgba(255,255,255,0.5)"/><rect x="30.75" y="15.3" width="2" height="30.8" rx="1" fill="rgba(255,255,255,0.5)"/><rect x="34.75" y="22.5" width="2" height="16.3" rx="1" fill="rgba(255,255,255,0.5)"/><rect x="38.75" y="18.6" width="2" height="24.2" rx="1" fill="rgba(255,255,255,0.5)"/><rect x="42.75" y="19.1" width="2" height="23.2" rx="1" fill="rgba(255,255,255,0.5)"/><rect x="46.75" y="22.5" width="2" height="16.3" rx="1" fill="rgba(255,255,255,0.5)"/><rect x="50.75" y="20.6" width="2" height="20.2" rx="1" fill="rgba(255,255,255,0.5)"/><rect x="54.75" y="14.3" width="2" height="32.8" rx="1" fill="rgba(255,255,255,0.5)"/><rect x="58.75" y="22.0" width="2" height="17.3" rx="1" fill="rgba(255,255,255,0.5)"/><rect x="62.75" y="16.6" width="2" height="28.1" rx="1" fill="rgba(255,255,255,0.5)"/><rect x="66.75" y="19.6" width="2" height="22.2" rx="1" fill="rgba(255,255,255,0.5)"/><rect x="70.75" y="19.1" width="2" height="23.2" rx="1" fill="rgba(255,255,255,0.5)"/><rect x="74.75" y="16.9" width="2" height="27.6" rx="1" fill="rgba(255,255,255,0.5)"/><rect x="78.75" y="17.4" width="2" height="26.6" rx="1" fill="rgba(255,255,255,0.5)"/><rect x="82.75" y="22.5" width="2" height="16.3" rx="1" fill="rgba(255,255,255,0.5)"/><rect x="86.75" y="20.4" width="2" height="20.7" rx="1" fill="rgba(255,255,255,0.5)"/><rect x="90.75" y="16.9" width="2" height="27.6" rx="1" fill="rgba(255,255,255,0.5)"/><rect x="94.75" y="20.7" width="2" height="20.0" rx="1" fill="rgba(255,255,255,0.5)"/><rect x="98.75" y="20.4" width="2" height="20.7" rx="1" fill="rgba(255,255,255,0.5)"/><rect x="102.75" y="18.9" width="2" height="23.7" rx="1" fill="rgba(255,255,255,0.5)"/><rect x="106.75" y="20.0" width="2" height="21.4" rx="1" fill="rgba(255,255,255,0.5)"/><rect x="110.75" y="20.6" width="2" height="20.2" rx="1" fill="rgba(255,255,255,0.5)"/><rect x="114.75" y="18.4" width="2" height="24.7" rx="1" fill="rgba(255,255,255,0.5)"/><rect x="118.75" y="17.4" width="2" height="26.5" rx="1" fill="rgba(255,255,255,0.5)"/><rect x="122.75" y="19.5" width="2" height="22.4" rx="1" fill="rgba(255,255,255,0.5)"/></svg></div>
<div class="abs" style="left:745px;top:309px;width:127px;height:59px;border-radius:7px;background:#ab216a;overflow:hidden"><svg width="127" height="59" style="position:absolute;left:0;top:0"><rect x="2.75" y="15.4" width="2" height="30.6" rx="1" fill="rgba(255,255,255,0.5)"/><rect x="6.75" y="16.3" width="2" height="28.8" rx="1" fill="rgba(255,255,255,0.5)"/><rect x="10.75" y="17.3" width="2" height="26.8" rx="1" fill="rgba(255,255,255,0.5)"/><rect x="14.75" y="23.0" width="2" height="15.3" rx="1" fill="rgba(255,255,255,0.5)"/><rect x="18.75" y="16.9" width="2" height="27.6" rx="1" fill="rgba(255,255,255,0.5)"/><rect x="22.75" y="13.7" width="2" height="34.0" rx="1" fill="rgba(255,255,255,0.5)"/><rect x="26.75" y="20.4" width="2" height="20.7" rx="1" fill="rgba(255,255,255,0.5)"/><rect x="30.75" y="15.3" width="2" height="30.8" rx="1" fill="rgba(255,255,255,0.5)"/><rect x="34.75" y="22.5" width="2" height="16.3" rx="1" fill="rgba(255,255,255,0.5)"/><rect x="38.75" y="18.6" width="2" height="24.2" rx="1" fill="rgba(255,255,255,0.5)"/><rect x="42.75" y="19.1" width="2" height="23.2" rx="1" fill="rgba(255,255,255,0.5)"/><rect x="46.75" y="22.5" width="2" height="16.3" rx="1" fill="rgba(255,255,255,0.5)"/><rect x="50.75" y="20.6" width="2" height="20.2" rx="1" fill="rgba(255,255,255,0.5)"/><rect x="54.75" y="14.3" width="2" height="32.8" rx="1" fill="rgba(255,255,255,0.5)"/><rect x="58.75" y="22.0" width="2" height="17.3" rx="1" fill="rgba(255,255,255,0.5)"/><rect x="62.75" y="16.6" width="2" height="28.1" rx="1" fill="rgba(255,255,255,0.5)"/><rect x="66.75" y="19.6" width="2" height="22.2" rx="1" fill="rgba(255,255,255,0.5)"/><rect x="70.75" y="19.1" width="2" height="23.2" rx="1" fill="rgba(255,255,255,0.5)"/><rect x="74.75" y="16.9" width="2" height="27.6" rx="1" fill="rgba(255,255,255,0.5)"/><rect x="78.75" y="17.4" width="2" height="26.6" rx="1" fill="rgba(255,255,255,0.5)"/><rect x="82.75" y="22.5" width="2" height="16.3" rx="1" fill="rgba(255,255,255,0.5)"/><rect x="86.75" y="20.4" width="2" height="20.7" rx="1" fill="rgba(255,255,255,0.5)"/><rect x="90.75" y="16.9" width="2" height="27.6" rx="1" fill="rgba(255,255,255,0.5)"/><rect x="94.75" y="20.7" width="2" height="20.0" rx="1" fill="rgba(255,255,255,0.5)"/><rect x="98.75" y="20.4" width="2" height="20.7" rx="1" fill="rgba(255,255,255,0.5)"/><rect x="102.75" y="18.9" width="2" height="23.7" rx="1" fill="rgba(255,255,255,0.5)"/><rect x="106.75" y="20.0" width="2" height="21.4" rx="1" fill="rgba(255,255,255,0.5)"/><rect x="110.75" y="20.6" width="2" height="20.2" rx="1" fill="rgba(255,255,255,0.5)"/><rect x="114.75" y="18.4" width="2" height="24.7" rx="1" fill="rgba(255,255,255,0.5)"/><rect x="118.75" y="17.4" width="2" height="26.5" rx="1" fill="rgba(255,255,255,0.5)"/><rect x="122.75" y="19.5" width="2" height="22.4" rx="1" fill="rgba(255,255,255,0.5)"/></svg></div>
<div class="abs" style="left:490px;top:373px;width:128px;height:59px;border-radius:7px;background:#8f3a8f;overflow:hidden"><svg width="128" height="59" style="position:absolute;left:0;top:0"><rect x="2.95" y="29.8" width="1.6" height="1.8" fill="rgba(255,255,255,0.5)"/><rect x="6.95" y="29.8" width="1.6" height="1.8" fill="rgba(255,255,255,0.5)"/><rect x="10.95" y="29.8" width="1.6" height="1.8" fill="rgba(255,255,255,0.5)"/><rect x="14.95" y="29.8" width="1.6" height="1.8" fill="rgba(255,255,255,0.5)"/><rect x="18.95" y="29.8" width="1.6" height="1.8" fill="rgba(255,255,255,0.5)"/><rect x="22.95" y="29.8" width="1.6" height="1.8" fill="rgba(255,255,255,0.5)"/><rect x="26.75" y="16.9" width="2" height="27.6" rx="1" fill="rgba(255,255,255,0.5)"/><rect x="30.75" y="17.5" width="2" height="26.3" rx="1" fill="rgba(255,255,255,0.5)"/><rect x="34.75" y="27.4" width="2" height="6.6" rx="1" fill="rgba(255,255,255,0.5)"/><rect x="38.75" y="28.4" width="2" height="4.6" rx="1" fill="rgba(255,255,255,0.5)"/><rect x="42.95" y="29.8" width="1.6" height="1.8" fill="rgba(255,255,255,0.5)"/><rect x="46.95" y="29.8" width="1.6" height="1.8" fill="rgba(255,255,255,0.5)"/><rect x="50.95" y="29.8" width="1.6" height="1.8" fill="rgba(255,255,255,0.5)"/><rect x="54.95" y="29.8" width="1.6" height="1.8" fill="rgba(255,255,255,0.5)"/><rect x="58.75" y="19.5" width="2" height="22.4" rx="1" fill="rgba(255,255,255,0.5)"/><rect x="62.75" y="20.6" width="2" height="20.2" rx="1" fill="rgba(255,255,255,0.5)"/><rect x="66.75" y="26.4" width="2" height="8.6" rx="1" fill="rgba(255,255,255,0.5)"/><rect x="70.75" y="28.4" width="2" height="4.6" rx="1" fill="rgba(255,255,255,0.5)"/><rect x="74.95" y="29.8" width="1.6" height="1.8" fill="rgba(255,255,255,0.5)"/><rect x="78.95" y="29.8" width="1.6" height="1.8" fill="rgba(255,255,255,0.5)"/><rect x="82.95" y="29.8" width="1.6" height="1.8" fill="rgba(255,255,255,0.5)"/><rect x="86.95" y="29.8" width="1.6" height="1.8" fill="rgba(255,255,255,0.5)"/><rect x="90.75" y="15.2" width="2" height="30.9" rx="1" fill="rgba(255,255,255,0.5)"/><rect x="94.75" y="22.9" width="2" height="15.6" rx="1" fill="rgba(255,255,255,0.5)"/><rect x="98.75" y="27.4" width="2" height="6.6" rx="1" fill="rgba(255,255,255,0.5)"/><rect x="102.75" y="28.4" width="2" height="4.6" rx="1" fill="rgba(255,255,255,0.5)"/><rect x="106.95" y="29.8" width="1.6" height="1.8" fill="rgba(255,255,255,0.5)"/><rect x="110.95" y="29.8" width="1.6" height="1.8" fill="rgba(255,255,255,0.5)"/><rect x="114.95" y="29.8" width="1.6" height="1.8" fill="rgba(255,255,255,0.5)"/><rect x="118.95" y="29.8" width="1.6" height="1.8" fill="rgba(255,255,255,0.5)"/><rect x="122.75" y="22.5" width="2" height="16.3" rx="1" fill="rgba(255,255,255,0.5)"/></svg></div>
<div class="abs" style="left:618px;top:373px;width:126px;height:59px;border-radius:7px;background:#8f3a8f;overflow:hidden"><svg width="126" height="59" style="position:absolute;left:0;top:0"><rect x="2.95" y="29.8" width="1.6" height="1.8" fill="rgba(255,255,255,0.5)"/><rect x="6.95" y="29.8" width="1.6" height="1.8" fill="rgba(255,255,255,0.5)"/><rect x="10.95" y="29.8" width="1.6" height="1.8" fill="rgba(255,255,255,0.5)"/><rect x="14.95" y="29.8" width="1.6" height="1.8" fill="rgba(255,255,255,0.5)"/><rect x="18.95" y="29.8" width="1.6" height="1.8" fill="rgba(255,255,255,0.5)"/><rect x="22.95" y="29.8" width="1.6" height="1.8" fill="rgba(255,255,255,0.5)"/><rect x="26.75" y="16.9" width="2" height="27.6" rx="1" fill="rgba(255,255,255,0.5)"/><rect x="30.75" y="17.5" width="2" height="26.3" rx="1" fill="rgba(255,255,255,0.5)"/><rect x="34.75" y="27.4" width="2" height="6.6" rx="1" fill="rgba(255,255,255,0.5)"/><rect x="38.75" y="28.4" width="2" height="4.6" rx="1" fill="rgba(255,255,255,0.5)"/><rect x="42.95" y="29.8" width="1.6" height="1.8" fill="rgba(255,255,255,0.5)"/><rect x="46.95" y="29.8" width="1.6" height="1.8" fill="rgba(255,255,255,0.5)"/><rect x="50.95" y="29.8" width="1.6" height="1.8" fill="rgba(255,255,255,0.5)"/><rect x="54.95" y="29.8" width="1.6" height="1.8" fill="rgba(255,255,255,0.5)"/><rect x="58.75" y="19.5" width="2" height="22.4" rx="1" fill="rgba(255,255,255,0.5)"/><rect x="62.75" y="20.6" width="2" height="20.2" rx="1" fill="rgba(255,255,255,0.5)"/><rect x="66.75" y="26.4" width="2" height="8.6" rx="1" fill="rgba(255,255,255,0.5)"/><rect x="70.75" y="28.4" width="2" height="4.6" rx="1" fill="rgba(255,255,255,0.5)"/><rect x="74.95" y="29.8" width="1.6" height="1.8" fill="rgba(255,255,255,0.5)"/><rect x="78.95" y="29.8" width="1.6" height="1.8" fill="rgba(255,255,255,0.5)"/><rect x="82.95" y="29.8" width="1.6" height="1.8" fill="rgba(255,255,255,0.5)"/><rect x="86.95" y="29.8" width="1.6" height="1.8" fill="rgba(255,255,255,0.5)"/><rect x="90.75" y="15.2" width="2" height="30.9" rx="1" fill="rgba(255,255,255,0.5)"/><rect x="94.75" y="22.9" width="2" height="15.6" rx="1" fill="rgba(255,255,255,0.5)"/><rect x="98.75" y="27.4" width="2" height="6.6" rx="1" fill="rgba(255,255,255,0.5)"/><rect x="102.75" y="28.4" width="2" height="4.6" rx="1" fill="rgba(255,255,255,0.5)"/><rect x="106.95" y="29.8" width="1.6" height="1.8" fill="rgba(255,255,255,0.5)"/><rect x="110.95" y="29.8" width="1.6" height="1.8" fill="rgba(255,255,255,0.5)"/><rect x="114.95" y="29.8" width="1.6" height="1.8" fill="rgba(255,255,255,0.5)"/><rect x="118.95" y="29.8" width="1.6" height="1.8" fill="rgba(255,255,255,0.5)"/><rect x="122.75" y="22.5" width="2" height="16.3" rx="1" fill="rgba(255,255,255,0.5)"/></svg></div>
<div class="abs" style="left:618px;top:437px;width:127px;height:59px;border-radius:7px;background:#8411e6;overflow:hidden"><svg width="127" height="59" style="position:absolute;left:0;top:0"><rect x="2.75" y="26.5" width="2" height="8.4" rx="1" fill="rgba(255,255,255,0.5)"/><rect x="6.75" y="17.7" width="2" height="26.0" rx="1" fill="rgba(255,255,255,0.5)"/><rect x="10.75" y="21.6" width="2" height="18.2" rx="1" fill="rgba(255,255,255,0.5)"/><rect x="14.75" y="25.4" width="2" height="10.5" rx="1" fill="rgba(255,255,255,0.5)"/><rect x="18.75" y="27.4" width="2" height="6.6" rx="1" fill="rgba(255,255,255,0.5)"/><rect x="22.75" y="27.8" width="2" height="5.7" rx="1" fill="rgba(255,255,255,0.5)"/><rect x="26.75" y="26.5" width="2" height="8.4" rx="1" fill="rgba(255,255,255,0.5)"/><rect x="30.75" y="28.6" width="2" height="4.1" rx="1" fill="rgba(255,255,255,0.5)"/><rect x="34.75" y="27.8" width="2" height="5.7" rx="1" fill="rgba(255,255,255,0.5)"/><rect x="38.75" y="20.6" width="2" height="20.2" rx="1" fill="rgba(255,255,255,0.5)"/><rect x="42.75" y="23.4" width="2" height="14.5" rx="1" fill="rgba(255,255,255,0.5)"/><rect x="46.75" y="22.4" width="2" height="16.5" rx="1" fill="rgba(255,255,255,0.5)"/><rect x="50.75" y="26.8" width="2" height="7.7" rx="1" fill="rgba(255,255,255,0.5)"/><rect x="54.75" y="24.5" width="2" height="12.3" rx="1" fill="rgba(255,255,255,0.5)"/><rect x="58.75" y="26.4" width="2" height="8.6" rx="1" fill="rgba(255,255,255,0.5)"/><rect x="62.75" y="26.8" width="2" height="7.7" rx="1" fill="rgba(255,255,255,0.5)"/><rect x="66.75" y="25.4" width="2" height="10.5" rx="1" fill="rgba(255,255,255,0.5)"/><rect x="70.75" y="19.9" width="2" height="21.5" rx="1" fill="rgba(255,255,255,0.5)"/><rect x="74.75" y="19.5" width="2" height="22.4" rx="1" fill="rgba(255,255,255,0.5)"/><rect x="78.75" y="23.4" width="2" height="14.5" rx="1" fill="rgba(255,255,255,0.5)"/><rect x="82.75" y="27.1" width="2" height="7.2" rx="1" fill="rgba(255,255,255,0.5)"/><rect x="86.75" y="25.9" width="2" height="9.7" rx="1" fill="rgba(255,255,255,0.5)"/><rect x="90.75" y="27.4" width="2" height="6.6" rx="1" fill="rgba(255,255,255,0.5)"/><rect x="94.75" y="28.2" width="2" height="4.9" rx="1" fill="rgba(255,255,255,0.5)"/><rect x="98.75" y="26.1" width="2" height="9.2" rx="1" fill="rgba(255,255,255,0.5)"/><rect x="102.75" y="23.5" width="2" height="14.3" rx="1" fill="rgba(255,255,255,0.5)"/><rect x="106.75" y="24.5" width="2" height="12.3" rx="1" fill="rgba(255,255,255,0.5)"/><rect x="110.75" y="26.1" width="2" height="9.2" rx="1" fill="rgba(255,255,255,0.5)"/><rect x="114.75" y="26.4" width="2" height="8.6" rx="1" fill="rgba(255,255,255,0.5)"/><rect x="118.75" y="19.7" width="2" height="22.0" rx="1" fill="rgba(255,255,255,0.5)"/><rect x="122.75" y="20.6" width="2" height="20.2" rx="1" fill="rgba(255,255,255,0.5)"/></svg></div>
<div class="abs" style="left:745px;top:437px;width:128px;height:59px;border-radius:7px;background:#8411e6;overflow:hidden"><svg width="128" height="59" style="position:absolute;left:0;top:0"><rect x="2.75" y="26.5" width="2" height="8.4" rx="1" fill="rgba(255,255,255,0.5)"/><rect x="6.75" y="17.7" width="2" height="26.0" rx="1" fill="rgba(255,255,255,0.5)"/><rect x="10.75" y="21.6" width="2" height="18.2" rx="1" fill="rgba(255,255,255,0.5)"/><rect x="14.75" y="25.4" width="2" height="10.5" rx="1" fill="rgba(255,255,255,0.5)"/><rect x="18.75" y="27.4" width="2" height="6.6" rx="1" fill="rgba(255,255,255,0.5)"/><rect x="22.75" y="27.8" width="2" height="5.7" rx="1" fill="rgba(255,255,255,0.5)"/><rect x="26.75" y="26.5" width="2" height="8.4" rx="1" fill="rgba(255,255,255,0.5)"/><rect x="30.75" y="28.6" width="2" height="4.1" rx="1" fill="rgba(255,255,255,0.5)"/><rect x="34.75" y="27.8" width="2" height="5.7" rx="1" fill="rgba(255,255,255,0.5)"/><rect x="38.75" y="20.6" width="2" height="20.2" rx="1" fill="rgba(255,255,255,0.5)"/><rect x="42.75" y="23.4" width="2" height="14.5" rx="1" fill="rgba(255,255,255,0.5)"/><rect x="46.75" y="22.4" width="2" height="16.5" rx="1" fill="rgba(255,255,255,0.5)"/><rect x="50.75" y="26.8" width="2" height="7.7" rx="1" fill="rgba(255,255,255,0.5)"/><rect x="54.75" y="24.5" width="2" height="12.3" rx="1" fill="rgba(255,255,255,0.5)"/><rect x="58.75" y="26.4" width="2" height="8.6" rx="1" fill="rgba(255,255,255,0.5)"/><rect x="62.75" y="26.8" width="2" height="7.7" rx="1" fill="rgba(255,255,255,0.5)"/><rect x="66.75" y="25.4" width="2" height="10.5" rx="1" fill="rgba(255,255,255,0.5)"/><rect x="70.75" y="19.9" width="2" height="21.5" rx="1" fill="rgba(255,255,255,0.5)"/><rect x="74.75" y="19.5" width="2" height="22.4" rx="1" fill="rgba(255,255,255,0.5)"/><rect x="78.75" y="23.4" width="2" height="14.5" rx="1" fill="rgba(255,255,255,0.5)"/><rect x="82.75" y="27.1" width="2" height="7.2" rx="1" fill="rgba(255,255,255,0.5)"/><rect x="86.75" y="25.9" width="2" height="9.7" rx="1" fill="rgba(255,255,255,0.5)"/><rect x="90.75" y="27.4" width="2" height="6.6" rx="1" fill="rgba(255,255,255,0.5)"/><rect x="94.75" y="28.2" width="2" height="4.9" rx="1" fill="rgba(255,255,255,0.5)"/><rect x="98.75" y="26.1" width="2" height="9.2" rx="1" fill="rgba(255,255,255,0.5)"/><rect x="102.75" y="23.5" width="2" height="14.3" rx="1" fill="rgba(255,255,255,0.5)"/><rect x="106.75" y="24.5" width="2" height="12.3" rx="1" fill="rgba(255,255,255,0.5)"/><rect x="110.75" y="26.1" width="2" height="9.2" rx="1" fill="rgba(255,255,255,0.5)"/><rect x="114.75" y="26.4" width="2" height="8.6" rx="1" fill="rgba(255,255,255,0.5)"/><rect x="118.75" y="19.7" width="2" height="22.0" rx="1" fill="rgba(255,255,255,0.5)"/><rect x="122.75" y="20.6" width="2" height="20.2" rx="1" fill="rgba(255,255,255,0.5)"/></svg></div>
<div class="abs" style="left:873px;top:437px;width:127px;height:59px;border-radius:7px;background:#8411e6;overflow:hidden"><svg width="127" height="59" style="position:absolute;left:0;top:0"><rect x="2.75" y="26.5" width="2" height="8.4" rx="1" fill="rgba(255,255,255,0.5)"/><rect x="6.75" y="17.7" width="2" height="26.0" rx="1" fill="rgba(255,255,255,0.5)"/><rect x="10.75" y="21.6" width="2" height="18.2" rx="1" fill="rgba(255,255,255,0.5)"/><rect x="14.75" y="25.4" width="2" height="10.5" rx="1" fill="rgba(255,255,255,0.5)"/><rect x="18.75" y="27.4" width="2" height="6.6" rx="1" fill="rgba(255,255,255,0.5)"/><rect x="22.75" y="27.8" width="2" height="5.7" rx="1" fill="rgba(255,255,255,0.5)"/><rect x="26.75" y="26.5" width="2" height="8.4" rx="1" fill="rgba(255,255,255,0.5)"/><rect x="30.75" y="28.6" width="2" height="4.1" rx="1" fill="rgba(255,255,255,0.5)"/><rect x="34.75" y="27.8" width="2" height="5.7" rx="1" fill="rgba(255,255,255,0.5)"/><rect x="38.75" y="20.6" width="2" height="20.2" rx="1" fill="rgba(255,255,255,0.5)"/><rect x="42.75" y="23.4" width="2" height="14.5" rx="1" fill="rgba(255,255,255,0.5)"/><rect x="46.75" y="22.4" width="2" height="16.5" rx="1" fill="rgba(255,255,255,0.5)"/><rect x="50.75" y="26.8" width="2" height="7.7" rx="1" fill="rgba(255,255,255,0.5)"/><rect x="54.75" y="24.5" width="2" height="12.3" rx="1" fill="rgba(255,255,255,0.5)"/><rect x="58.75" y="26.4" width="2" height="8.6" rx="1" fill="rgba(255,255,255,0.5)"/><rect x="62.75" y="26.8" width="2" height="7.7" rx="1" fill="rgba(255,255,255,0.5)"/><rect x="66.75" y="25.4" width="2" height="10.5" rx="1" fill="rgba(255,255,255,0.5)"/><rect x="70.75" y="19.9" width="2" height="21.5" rx="1" fill="rgba(255,255,255,0.5)"/><rect x="74.75" y="19.5" width="2" height="22.4" rx="1" fill="rgba(255,255,255,0.5)"/><rect x="78.75" y="23.4" width="2" height="14.5" rx="1" fill="rgba(255,255,255,0.5)"/><rect x="82.75" y="27.1" width="2" height="7.2" rx="1" fill="rgba(255,255,255,0.5)"/><rect x="86.75" y="25.9" width="2" height="9.7" rx="1" fill="rgba(255,255,255,0.5)"/><rect x="90.75" y="27.4" width="2" height="6.6" rx="1" fill="rgba(255,255,255,0.5)"/><rect x="94.75" y="28.2" width="2" height="4.9" rx="1" fill="rgba(255,255,255,0.5)"/><rect x="98.75" y="26.1" width="2" height="9.2" rx="1" fill="rgba(255,255,255,0.5)"/><rect x="102.75" y="23.5" width="2" height="14.3" rx="1" fill="rgba(255,255,255,0.5)"/><rect x="106.75" y="24.5" width="2" height="12.3" rx="1" fill="rgba(255,255,255,0.5)"/><rect x="110.75" y="26.1" width="2" height="9.2" rx="1" fill="rgba(255,255,255,0.5)"/><rect x="114.75" y="26.4" width="2" height="8.6" rx="1" fill="rgba(255,255,255,0.5)"/><rect x="118.75" y="19.7" width="2" height="22.0" rx="1" fill="rgba(255,255,255,0.5)"/><rect x="122.75" y="20.6" width="2" height="20.2" rx="1" fill="rgba(255,255,255,0.5)"/><path d="M106 0 L127 0 L127 59 Z" fill="rgba(255,255,255,0.35)"/></svg></div>
<div class="abs" style="left:618px;top:501px;width:127px;height:59px;border-radius:7px;background:#2a4be5;overflow:hidden"><svg width="127" height="59" style="position:absolute;left:0;top:0"><rect x="2.75" y="25.4" width="2" height="10.5" rx="1" fill="rgba(255,255,255,0.5)"/><rect x="6.75" y="19.8" width="2" height="21.9" rx="1" fill="rgba(255,255,255,0.5)"/><rect x="10.75" y="19.8" width="2" height="21.9" rx="1" fill="rgba(255,255,255,0.5)"/><rect x="14.75" y="23.5" width="2" height="14.3" rx="1" fill="rgba(255,255,255,0.5)"/><rect x="18.75" y="23.8" width="2" height="13.8" rx="1" fill="rgba(255,255,255,0.5)"/><rect x="22.75" y="22.4" width="2" height="16.5" rx="1" fill="rgba(255,255,255,0.5)"/><rect x="26.75" y="22.2" width="2" height="17.0" rx="1" fill="rgba(255,255,255,0.5)"/><rect x="30.75" y="26.4" width="2" height="8.6" rx="1" fill="rgba(255,255,255,0.5)"/><rect x="34.75" y="25.1" width="2" height="11.1" rx="1" fill="rgba(255,255,255,0.5)"/><rect x="38.75" y="19.5" width="2" height="22.4" rx="1" fill="rgba(255,255,255,0.5)"/><rect x="42.75" y="21.2" width="2" height="19.0" rx="1" fill="rgba(255,255,255,0.5)"/><rect x="46.75" y="22.4" width="2" height="16.5" rx="1" fill="rgba(255,255,255,0.5)"/><rect x="50.75" y="24.8" width="2" height="11.8" rx="1" fill="rgba(255,255,255,0.5)"/><rect x="54.75" y="26.1" width="2" height="9.2" rx="1" fill="rgba(255,255,255,0.5)"/><rect x="58.75" y="24.4" width="2" height="12.5" rx="1" fill="rgba(255,255,255,0.5)"/><rect x="62.75" y="26.6" width="2" height="8.1" rx="1" fill="rgba(255,255,255,0.5)"/><rect x="66.75" y="24.8" width="2" height="11.8" rx="1" fill="rgba(255,255,255,0.5)"/><rect x="70.75" y="20.6" width="2" height="20.2" rx="1" fill="rgba(255,255,255,0.5)"/><rect x="74.75" y="23.5" width="2" height="14.3" rx="1" fill="rgba(255,255,255,0.5)"/><rect x="78.75" y="20.6" width="2" height="20.2" rx="1" fill="rgba(255,255,255,0.5)"/><rect x="82.75" y="24.0" width="2" height="13.3" rx="1" fill="rgba(255,255,255,0.5)"/><rect x="86.75" y="24.0" width="2" height="13.3" rx="1" fill="rgba(255,255,255,0.5)"/><rect x="90.75" y="23.3" width="2" height="14.8" rx="1" fill="rgba(255,255,255,0.5)"/><rect x="94.75" y="23.2" width="2" height="15.0" rx="1" fill="rgba(255,255,255,0.5)"/><rect x="98.75" y="27.4" width="2" height="6.6" rx="1" fill="rgba(255,255,255,0.5)"/><rect x="102.75" y="25.1" width="2" height="11.1" rx="1" fill="rgba(255,255,255,0.5)"/><rect x="106.75" y="21.6" width="2" height="18.2" rx="1" fill="rgba(255,255,255,0.5)"/><rect x="110.75" y="21.4" width="2" height="18.7" rx="1" fill="rgba(255,255,255,0.5)"/><rect x="114.75" y="26.1" width="2" height="9.2" rx="1" fill="rgba(255,255,255,0.5)"/><rect x="118.75" y="23.3" width="2" height="14.8" rx="1" fill="rgba(255,255,255,0.5)"/><rect x="122.75" y="22.2" width="2" height="17.0" rx="1" fill="rgba(255,255,255,0.5)"/></svg></div>
<div class="abs" style="left:745px;top:501px;width:128px;height:59px;border-radius:7px;background:#2a4be5;overflow:hidden"><svg width="128" height="59" style="position:absolute;left:0;top:0"><rect x="2.75" y="25.4" width="2" height="10.5" rx="1" fill="rgba(255,255,255,0.5)"/><rect x="6.75" y="19.8" width="2" height="21.9" rx="1" fill="rgba(255,255,255,0.5)"/><rect x="10.75" y="19.8" width="2" height="21.9" rx="1" fill="rgba(255,255,255,0.5)"/><rect x="14.75" y="23.5" width="2" height="14.3" rx="1" fill="rgba(255,255,255,0.5)"/><rect x="18.75" y="23.8" width="2" height="13.8" rx="1" fill="rgba(255,255,255,0.5)"/><rect x="22.75" y="22.4" width="2" height="16.5" rx="1" fill="rgba(255,255,255,0.5)"/><rect x="26.75" y="22.2" width="2" height="17.0" rx="1" fill="rgba(255,255,255,0.5)"/><rect x="30.75" y="26.4" width="2" height="8.6" rx="1" fill="rgba(255,255,255,0.5)"/><rect x="34.75" y="25.1" width="2" height="11.1" rx="1" fill="rgba(255,255,255,0.5)"/><rect x="38.75" y="19.5" width="2" height="22.4" rx="1" fill="rgba(255,255,255,0.5)"/><rect x="42.75" y="21.2" width="2" height="19.0" rx="1" fill="rgba(255,255,255,0.5)"/><rect x="46.75" y="22.4" width="2" height="16.5" rx="1" fill="rgba(255,255,255,0.5)"/><rect x="50.75" y="24.8" width="2" height="11.8" rx="1" fill="rgba(255,255,255,0.5)"/><rect x="54.75" y="26.1" width="2" height="9.2" rx="1" fill="rgba(255,255,255,0.5)"/><rect x="58.75" y="24.4" width="2" height="12.5" rx="1" fill="rgba(255,255,255,0.5)"/><rect x="62.75" y="26.6" width="2" height="8.1" rx="1" fill="rgba(255,255,255,0.5)"/><rect x="66.75" y="24.8" width="2" height="11.8" rx="1" fill="rgba(255,255,255,0.5)"/><rect x="70.75" y="20.6" width="2" height="20.2" rx="1" fill="rgba(255,255,255,0.5)"/><rect x="74.75" y="23.5" width="2" height="14.3" rx="1" fill="rgba(255,255,255,0.5)"/><rect x="78.75" y="20.6" width="2" height="20.2" rx="1" fill="rgba(255,255,255,0.5)"/><rect x="82.75" y="24.0" width="2" height="13.3" rx="1" fill="rgba(255,255,255,0.5)"/><rect x="86.75" y="24.0" width="2" height="13.3" rx="1" fill="rgba(255,255,255,0.5)"/><rect x="90.75" y="23.3" width="2" height="14.8" rx="1" fill="rgba(255,255,255,0.5)"/><rect x="94.75" y="23.2" width="2" height="15.0" rx="1" fill="rgba(255,255,255,0.5)"/><rect x="98.75" y="27.4" width="2" height="6.6" rx="1" fill="rgba(255,255,255,0.5)"/><rect x="102.75" y="25.1" width="2" height="11.1" rx="1" fill="rgba(255,255,255,0.5)"/><rect x="106.75" y="21.6" width="2" height="18.2" rx="1" fill="rgba(255,255,255,0.5)"/><rect x="110.75" y="21.4" width="2" height="18.7" rx="1" fill="rgba(255,255,255,0.5)"/><rect x="114.75" y="26.1" width="2" height="9.2" rx="1" fill="rgba(255,255,255,0.5)"/><rect x="118.75" y="23.3" width="2" height="14.8" rx="1" fill="rgba(255,255,255,0.5)"/><rect x="122.75" y="22.2" width="2" height="17.0" rx="1" fill="rgba(255,255,255,0.5)"/></svg></div>
<div class="abs" style="left:873px;top:501px;width:127px;height:59px;border-radius:7px;background:#2a4be5;overflow:hidden"><svg width="127" height="59" style="position:absolute;left:0;top:0"><rect x="2.75" y="25.4" width="2" height="10.5" rx="1" fill="rgba(255,255,255,0.5)"/><rect x="6.75" y="19.8" width="2" height="21.9" rx="1" fill="rgba(255,255,255,0.5)"/><rect x="10.75" y="19.8" width="2" height="21.9" rx="1" fill="rgba(255,255,255,0.5)"/><rect x="14.75" y="23.5" width="2" height="14.3" rx="1" fill="rgba(255,255,255,0.5)"/><rect x="18.75" y="23.8" width="2" height="13.8" rx="1" fill="rgba(255,255,255,0.5)"/><rect x="22.75" y="22.4" width="2" height="16.5" rx="1" fill="rgba(255,255,255,0.5)"/><rect x="26.75" y="22.2" width="2" height="17.0" rx="1" fill="rgba(255,255,255,0.5)"/><rect x="30.75" y="26.4" width="2" height="8.6" rx="1" fill="rgba(255,255,255,0.5)"/><rect x="34.75" y="25.1" width="2" height="11.1" rx="1" fill="rgba(255,255,255,0.5)"/><rect x="38.75" y="19.5" width="2" height="22.4" rx="1" fill="rgba(255,255,255,0.5)"/><rect x="42.75" y="21.2" width="2" height="19.0" rx="1" fill="rgba(255,255,255,0.5)"/><rect x="46.75" y="22.4" width="2" height="16.5" rx="1" fill="rgba(255,255,255,0.5)"/><rect x="50.75" y="24.8" width="2" height="11.8" rx="1" fill="rgba(255,255,255,0.5)"/><rect x="54.75" y="26.1" width="2" height="9.2" rx="1" fill="rgba(255,255,255,0.5)"/><rect x="58.75" y="24.4" width="2" height="12.5" rx="1" fill="rgba(255,255,255,0.5)"/><rect x="62.75" y="26.6" width="2" height="8.1" rx="1" fill="rgba(255,255,255,0.5)"/><rect x="66.75" y="24.8" width="2" height="11.8" rx="1" fill="rgba(255,255,255,0.5)"/><rect x="70.75" y="20.6" width="2" height="20.2" rx="1" fill="rgba(255,255,255,0.5)"/><rect x="74.75" y="23.5" width="2" height="14.3" rx="1" fill="rgba(255,255,255,0.5)"/><rect x="78.75" y="20.6" width="2" height="20.2" rx="1" fill="rgba(255,255,255,0.5)"/><rect x="82.75" y="24.0" width="2" height="13.3" rx="1" fill="rgba(255,255,255,0.5)"/><rect x="86.75" y="24.0" width="2" height="13.3" rx="1" fill="rgba(255,255,255,0.5)"/><rect x="90.75" y="23.3" width="2" height="14.8" rx="1" fill="rgba(255,255,255,0.5)"/><rect x="94.75" y="23.2" width="2" height="15.0" rx="1" fill="rgba(255,255,255,0.5)"/><rect x="98.75" y="27.4" width="2" height="6.6" rx="1" fill="rgba(255,255,255,0.5)"/><rect x="102.75" y="25.1" width="2" height="11.1" rx="1" fill="rgba(255,255,255,0.5)"/><rect x="106.75" y="21.6" width="2" height="18.2" rx="1" fill="rgba(255,255,255,0.5)"/><rect x="110.75" y="21.4" width="2" height="18.7" rx="1" fill="rgba(255,255,255,0.5)"/><rect x="114.75" y="26.1" width="2" height="9.2" rx="1" fill="rgba(255,255,255,0.5)"/><rect x="118.75" y="23.3" width="2" height="14.8" rx="1" fill="rgba(255,255,255,0.5)"/><rect x="122.75" y="22.2" width="2" height="17.0" rx="1" fill="rgba(255,255,255,0.5)"/><path d="M106 0 L127 0 L127 59 Z" fill="rgba(255,255,255,0.35)"/></svg></div>
<div class="abs" style="left:618px;top:565px;width:127px;height:59px;border-radius:7px;background:#006373;overflow:hidden"><svg width="127" height="59" style="position:absolute;left:0;top:0"><rect x="2.75" y="27.4" width="2" height="6.6" rx="1" fill="rgba(255,255,255,0.5)"/><rect x="6.75" y="23.5" width="2" height="14.3" rx="1" fill="rgba(255,255,255,0.5)"/><rect x="10.75" y="24.4" width="2" height="12.5" rx="1" fill="rgba(255,255,255,0.5)"/><rect x="14.75" y="24.4" width="2" height="12.5" rx="1" fill="rgba(255,255,255,0.5)"/><rect x="18.75" y="26.5" width="2" height="8.4" rx="1" fill="rgba(255,255,255,0.5)"/><rect x="22.75" y="27.5" width="2" height="6.4" rx="1" fill="rgba(255,255,255,0.5)"/><rect x="26.75" y="27.4" width="2" height="6.6" rx="1" fill="rgba(255,255,255,0.5)"/><rect x="30.75" y="28.4" width="2" height="4.6" rx="1" fill="rgba(255,255,255,0.5)"/><rect x="34.75" y="27.6" width="2" height="6.1" rx="1" fill="rgba(255,255,255,0.5)"/><rect x="38.75" y="23.8" width="2" height="13.8" rx="1" fill="rgba(255,255,255,0.5)"/><rect x="42.75" y="24.5" width="2" height="12.3" rx="1" fill="rgba(255,255,255,0.5)"/><rect x="46.75" y="24.3" width="2" height="12.8" rx="1" fill="rgba(255,255,255,0.5)"/><rect x="50.75" y="25.8" width="2" height="9.9" rx="1" fill="rgba(255,255,255,0.5)"/><rect x="54.75" y="25.4" width="2" height="10.5" rx="1" fill="rgba(255,255,255,0.5)"/><rect x="58.75" y="26.4" width="2" height="8.6" rx="1" fill="rgba(255,255,255,0.5)"/><rect x="62.75" y="28.1" width="2" height="5.2" rx="1" fill="rgba(255,255,255,0.5)"/><rect x="66.75" y="26.6" width="2" height="8.1" rx="1" fill="rgba(255,255,255,0.5)"/><rect x="70.75" y="24.9" width="2" height="11.6" rx="1" fill="rgba(255,255,255,0.5)"/><rect x="74.75" y="21.4" width="2" height="18.7" rx="1" fill="rgba(255,255,255,0.5)"/><rect x="78.75" y="25.4" width="2" height="10.5" rx="1" fill="rgba(255,255,255,0.5)"/><rect x="82.75" y="27.4" width="2" height="6.6" rx="1" fill="rgba(255,255,255,0.5)"/><rect x="86.75" y="27.1" width="2" height="7.2" rx="1" fill="rgba(255,255,255,0.5)"/><rect x="90.75" y="27.4" width="2" height="6.6" rx="1" fill="rgba(255,255,255,0.5)"/><rect x="94.75" y="28.4" width="2" height="4.6" rx="1" fill="rgba(255,255,255,0.5)"/><rect x="98.75" y="27.5" width="2" height="6.4" rx="1" fill="rgba(255,255,255,0.5)"/><rect x="102.75" y="25.4" width="2" height="10.5" rx="1" fill="rgba(255,255,255,0.5)"/><rect x="106.75" y="24.3" width="2" height="12.8" rx="1" fill="rgba(255,255,255,0.5)"/><rect x="110.75" y="26.1" width="2" height="9.2" rx="1" fill="rgba(255,255,255,0.5)"/><rect x="114.75" y="26.8" width="2" height="7.7" rx="1" fill="rgba(255,255,255,0.5)"/><rect x="118.75" y="17.7" width="2" height="26.0" rx="1" fill="rgba(255,255,255,0.5)"/><rect x="122.75" y="22.8" width="2" height="15.8" rx="1" fill="rgba(255,255,255,0.5)"/></svg></div>
<div class="abs" style="left:745px;top:565px;width:128px;height:59px;border-radius:7px;background:#006373;overflow:hidden"><svg width="128" height="59" style="position:absolute;left:0;top:0"><rect x="2.75" y="27.4" width="2" height="6.6" rx="1" fill="rgba(255,255,255,0.5)"/><rect x="6.75" y="23.5" width="2" height="14.3" rx="1" fill="rgba(255,255,255,0.5)"/><rect x="10.75" y="24.4" width="2" height="12.5" rx="1" fill="rgba(255,255,255,0.5)"/><rect x="14.75" y="24.4" width="2" height="12.5" rx="1" fill="rgba(255,255,255,0.5)"/><rect x="18.75" y="26.5" width="2" height="8.4" rx="1" fill="rgba(255,255,255,0.5)"/><rect x="22.75" y="27.5" width="2" height="6.4" rx="1" fill="rgba(255,255,255,0.5)"/><rect x="26.75" y="27.4" width="2" height="6.6" rx="1" fill="rgba(255,255,255,0.5)"/><rect x="30.75" y="28.4" width="2" height="4.6" rx="1" fill="rgba(255,255,255,0.5)"/><rect x="34.75" y="27.6" width="2" height="6.1" rx="1" fill="rgba(255,255,255,0.5)"/><rect x="38.75" y="23.8" width="2" height="13.8" rx="1" fill="rgba(255,255,255,0.5)"/><rect x="42.75" y="24.5" width="2" height="12.3" rx="1" fill="rgba(255,255,255,0.5)"/><rect x="46.75" y="24.3" width="2" height="12.8" rx="1" fill="rgba(255,255,255,0.5)"/><rect x="50.75" y="25.8" width="2" height="9.9" rx="1" fill="rgba(255,255,255,0.5)"/><rect x="54.75" y="25.4" width="2" height="10.5" rx="1" fill="rgba(255,255,255,0.5)"/><rect x="58.75" y="26.4" width="2" height="8.6" rx="1" fill="rgba(255,255,255,0.5)"/><rect x="62.75" y="28.1" width="2" height="5.2" rx="1" fill="rgba(255,255,255,0.5)"/><rect x="66.75" y="26.6" width="2" height="8.1" rx="1" fill="rgba(255,255,255,0.5)"/><rect x="70.75" y="24.9" width="2" height="11.6" rx="1" fill="rgba(255,255,255,0.5)"/><rect x="74.75" y="21.4" width="2" height="18.7" rx="1" fill="rgba(255,255,255,0.5)"/><rect x="78.75" y="25.4" width="2" height="10.5" rx="1" fill="rgba(255,255,255,0.5)"/><rect x="82.75" y="27.4" width="2" height="6.6" rx="1" fill="rgba(255,255,255,0.5)"/><rect x="86.75" y="27.1" width="2" height="7.2" rx="1" fill="rgba(255,255,255,0.5)"/><rect x="90.75" y="27.4" width="2" height="6.6" rx="1" fill="rgba(255,255,255,0.5)"/><rect x="94.75" y="28.4" width="2" height="4.6" rx="1" fill="rgba(255,255,255,0.5)"/><rect x="98.75" y="27.5" width="2" height="6.4" rx="1" fill="rgba(255,255,255,0.5)"/><rect x="102.75" y="25.4" width="2" height="10.5" rx="1" fill="rgba(255,255,255,0.5)"/><rect x="106.75" y="24.3" width="2" height="12.8" rx="1" fill="rgba(255,255,255,0.5)"/><rect x="110.75" y="26.1" width="2" height="9.2" rx="1" fill="rgba(255,255,255,0.5)"/><rect x="114.75" y="26.8" width="2" height="7.7" rx="1" fill="rgba(255,255,255,0.5)"/><rect x="118.75" y="17.7" width="2" height="26.0" rx="1" fill="rgba(255,255,255,0.5)"/><rect x="122.75" y="22.8" width="2" height="15.8" rx="1" fill="rgba(255,255,255,0.5)"/></svg></div>
<div class="abs" style="left:873px;top:565px;width:127px;height:59px;border-radius:7px;background:#006373;overflow:hidden"><svg width="127" height="59" style="position:absolute;left:0;top:0"><rect x="2.75" y="27.4" width="2" height="6.6" rx="1" fill="rgba(255,255,255,0.5)"/><rect x="6.75" y="23.5" width="2" height="14.3" rx="1" fill="rgba(255,255,255,0.5)"/><rect x="10.75" y="24.4" width="2" height="12.5" rx="1" fill="rgba(255,255,255,0.5)"/><rect x="14.75" y="24.4" width="2" height="12.5" rx="1" fill="rgba(255,255,255,0.5)"/><rect x="18.75" y="26.5" width="2" height="8.4" rx="1" fill="rgba(255,255,255,0.5)"/><rect x="22.75" y="27.5" width="2" height="6.4" rx="1" fill="rgba(255,255,255,0.5)"/><rect x="26.75" y="27.4" width="2" height="6.6" rx="1" fill="rgba(255,255,255,0.5)"/><rect x="30.75" y="28.4" width="2" height="4.6" rx="1" fill="rgba(255,255,255,0.5)"/><rect x="34.75" y="27.6" width="2" height="6.1" rx="1" fill="rgba(255,255,255,0.5)"/><rect x="38.75" y="23.8" width="2" height="13.8" rx="1" fill="rgba(255,255,255,0.5)"/><rect x="42.75" y="24.5" width="2" height="12.3" rx="1" fill="rgba(255,255,255,0.5)"/><rect x="46.75" y="24.3" width="2" height="12.8" rx="1" fill="rgba(255,255,255,0.5)"/><rect x="50.75" y="25.8" width="2" height="9.9" rx="1" fill="rgba(255,255,255,0.5)"/><rect x="54.75" y="25.4" width="2" height="10.5" rx="1" fill="rgba(255,255,255,0.5)"/><rect x="58.75" y="26.4" width="2" height="8.6" rx="1" fill="rgba(255,255,255,0.5)"/><rect x="62.75" y="28.1" width="2" height="5.2" rx="1" fill="rgba(255,255,255,0.5)"/><rect x="66.75" y="26.6" width="2" height="8.1" rx="1" fill="rgba(255,255,255,0.5)"/><rect x="70.75" y="24.9" width="2" height="11.6" rx="1" fill="rgba(255,255,255,0.5)"/><rect x="74.75" y="21.4" width="2" height="18.7" rx="1" fill="rgba(255,255,255,0.5)"/><rect x="78.75" y="25.4" width="2" height="10.5" rx="1" fill="rgba(255,255,255,0.5)"/><rect x="82.75" y="27.4" width="2" height="6.6" rx="1" fill="rgba(255,255,255,0.5)"/><rect x="86.75" y="27.1" width="2" height="7.2" rx="1" fill="rgba(255,255,255,0.5)"/><rect x="90.75" y="27.4" width="2" height="6.6" rx="1" fill="rgba(255,255,255,0.5)"/><rect x="94.75" y="28.4" width="2" height="4.6" rx="1" fill="rgba(255,255,255,0.5)"/><rect x="98.75" y="27.5" width="2" height="6.4" rx="1" fill="rgba(255,255,255,0.5)"/><rect x="102.75" y="25.4" width="2" height="10.5" rx="1" fill="rgba(255,255,255,0.5)"/><rect x="106.75" y="24.3" width="2" height="12.8" rx="1" fill="rgba(255,255,255,0.5)"/><rect x="110.75" y="26.1" width="2" height="9.2" rx="1" fill="rgba(255,255,255,0.5)"/><rect x="114.75" y="26.8" width="2" height="7.7" rx="1" fill="rgba(255,255,255,0.5)"/><rect x="118.75" y="17.7" width="2" height="26.0" rx="1" fill="rgba(255,255,255,0.5)"/><rect x="122.75" y="22.8" width="2" height="15.8" rx="1" fill="rgba(255,255,255,0.5)"/><path d="M106 0 L127 0 L127 59 Z" fill="rgba(255,255,255,0.35)"/></svg></div>
<div class="abs" style="left:745px;top:629px;width:128px;height:59px;border-radius:7px;background:#006b56;overflow:hidden"><svg width="128" height="59" style="position:absolute;left:0;top:0"><rect x="2.75" y="14.2" width="2" height="33.0" rx="1" fill="rgba(255,255,255,0.5)"/><rect x="6.75" y="13.6" width="2" height="34.2" rx="1" fill="rgba(255,255,255,0.5)"/><rect x="10.75" y="15.7" width="2" height="30.0" rx="1" fill="rgba(255,255,255,0.5)"/><rect x="14.75" y="17.5" width="2" height="26.3" rx="1" fill="rgba(255,255,255,0.5)"/><rect x="18.75" y="19.9" width="2" height="21.5" rx="1" fill="rgba(255,255,255,0.5)"/><rect x="22.75" y="21.8" width="2" height="17.8" rx="1" fill="rgba(255,255,255,0.5)"/><rect x="26.75" y="24.8" width="2" height="11.8" rx="1" fill="rgba(255,255,255,0.5)"/><rect x="30.75" y="26.5" width="2" height="8.4" rx="1" fill="rgba(255,255,255,0.5)"/><rect x="34.75" y="14.1" width="2" height="33.3" rx="1" fill="rgba(255,255,255,0.5)"/><rect x="38.75" y="18.9" width="2" height="23.5" rx="1" fill="rgba(255,255,255,0.5)"/><rect x="42.75" y="17.4" width="2" height="26.6" rx="1" fill="rgba(255,255,255,0.5)"/><rect x="46.75" y="17.9" width="2" height="25.6" rx="1" fill="rgba(255,255,255,0.5)"/><rect x="50.75" y="21.4" width="2" height="18.7" rx="1" fill="rgba(255,255,255,0.5)"/><rect x="54.75" y="19.6" width="2" height="22.2" rx="1" fill="rgba(255,255,255,0.5)"/><rect x="58.75" y="21.4" width="2" height="18.7" rx="1" fill="rgba(255,255,255,0.5)"/><rect x="62.75" y="20.5" width="2" height="20.4" rx="1" fill="rgba(255,255,255,0.5)"/><rect x="66.75" y="17.4" width="2" height="26.6" rx="1" fill="rgba(255,255,255,0.5)"/><rect x="70.75" y="15.7" width="2" height="30.0" rx="1" fill="rgba(255,255,255,0.5)"/><rect x="74.75" y="18.4" width="2" height="24.7" rx="1" fill="rgba(255,255,255,0.5)"/><rect x="78.75" y="18.4" width="2" height="24.7" rx="1" fill="rgba(255,255,255,0.5)"/><rect x="82.75" y="17.6" width="2" height="26.1" rx="1" fill="rgba(255,255,255,0.5)"/><rect x="86.75" y="16.6" width="2" height="28.1" rx="1" fill="rgba(255,255,255,0.5)"/><rect x="90.75" y="17.0" width="2" height="27.4" rx="1" fill="rgba(255,255,255,0.5)"/><rect x="94.75" y="18.4" width="2" height="24.7" rx="1" fill="rgba(255,255,255,0.5)"/><rect x="98.75" y="17.4" width="2" height="26.6" rx="1" fill="rgba(255,255,255,0.5)"/><rect x="102.75" y="15.4" width="2" height="30.6" rx="1" fill="rgba(255,255,255,0.5)"/><rect x="106.75" y="15.4" width="2" height="30.6" rx="1" fill="rgba(255,255,255,0.5)"/><rect x="110.75" y="17.4" width="2" height="26.6" rx="1" fill="rgba(255,255,255,0.5)"/><rect x="114.75" y="16.2" width="2" height="28.9" rx="1" fill="rgba(255,255,255,0.5)"/><rect x="118.75" y="18.5" width="2" height="24.4" rx="1" fill="rgba(255,255,255,0.5)"/><rect x="122.75" y="17.1" width="2" height="27.1" rx="1" fill="rgba(255,255,255,0.5)"/></svg></div>
<div class="abs" style="left:873px;top:629px;width:127px;height:59px;border-radius:7px;background:#006b56;overflow:hidden"><svg width="127" height="59" style="position:absolute;left:0;top:0"><rect x="2.75" y="14.2" width="2" height="33.0" rx="1" fill="rgba(255,255,255,0.5)"/><rect x="6.75" y="13.6" width="2" height="34.2" rx="1" fill="rgba(255,255,255,0.5)"/><rect x="10.75" y="15.7" width="2" height="30.0" rx="1" fill="rgba(255,255,255,0.5)"/><rect x="14.75" y="17.5" width="2" height="26.3" rx="1" fill="rgba(255,255,255,0.5)"/><rect x="18.75" y="19.9" width="2" height="21.5" rx="1" fill="rgba(255,255,255,0.5)"/><rect x="22.75" y="21.8" width="2" height="17.8" rx="1" fill="rgba(255,255,255,0.5)"/><rect x="26.75" y="24.8" width="2" height="11.8" rx="1" fill="rgba(255,255,255,0.5)"/><rect x="30.75" y="26.5" width="2" height="8.4" rx="1" fill="rgba(255,255,255,0.5)"/><rect x="34.75" y="14.1" width="2" height="33.3" rx="1" fill="rgba(255,255,255,0.5)"/><rect x="38.75" y="18.9" width="2" height="23.5" rx="1" fill="rgba(255,255,255,0.5)"/><rect x="42.75" y="17.4" width="2" height="26.6" rx="1" fill="rgba(255,255,255,0.5)"/><rect x="46.75" y="17.9" width="2" height="25.6" rx="1" fill="rgba(255,255,255,0.5)"/><rect x="50.75" y="21.4" width="2" height="18.7" rx="1" fill="rgba(255,255,255,0.5)"/><rect x="54.75" y="19.6" width="2" height="22.2" rx="1" fill="rgba(255,255,255,0.5)"/><rect x="58.75" y="21.4" width="2" height="18.7" rx="1" fill="rgba(255,255,255,0.5)"/><rect x="62.75" y="20.5" width="2" height="20.4" rx="1" fill="rgba(255,255,255,0.5)"/><rect x="66.75" y="17.4" width="2" height="26.6" rx="1" fill="rgba(255,255,255,0.5)"/><rect x="70.75" y="15.7" width="2" height="30.0" rx="1" fill="rgba(255,255,255,0.5)"/><rect x="74.75" y="18.4" width="2" height="24.7" rx="1" fill="rgba(255,255,255,0.5)"/><rect x="78.75" y="18.4" width="2" height="24.7" rx="1" fill="rgba(255,255,255,0.5)"/><rect x="82.75" y="17.6" width="2" height="26.1" rx="1" fill="rgba(255,255,255,0.5)"/><rect x="86.75" y="16.6" width="2" height="28.1" rx="1" fill="rgba(255,255,255,0.5)"/><rect x="90.75" y="17.0" width="2" height="27.4" rx="1" fill="rgba(255,255,255,0.5)"/><rect x="94.75" y="18.4" width="2" height="24.7" rx="1" fill="rgba(255,255,255,0.5)"/><rect x="98.75" y="17.4" width="2" height="26.6" rx="1" fill="rgba(255,255,255,0.5)"/><rect x="102.75" y="15.4" width="2" height="30.6" rx="1" fill="rgba(255,255,255,0.5)"/><rect x="106.75" y="15.4" width="2" height="30.6" rx="1" fill="rgba(255,255,255,0.5)"/><rect x="110.75" y="17.4" width="2" height="26.6" rx="1" fill="rgba(255,255,255,0.5)"/><rect x="114.75" y="16.2" width="2" height="28.9" rx="1" fill="rgba(255,255,255,0.5)"/><rect x="118.75" y="18.5" width="2" height="24.4" rx="1" fill="rgba(255,255,255,0.5)"/><rect x="122.75" y="17.1" width="2" height="27.1" rx="1" fill="rgba(255,255,255,0.5)"/><path d="M106 0 L127 0 L127 59 Z" fill="rgba(255,255,255,0.35)"/></svg></div>
<div class="abs" style="left:877px;top:693px;width:104px;height:1px;background:#1f7a3a"></div><div class="abs" style="left:981px;top:693px;width:14px;height:1px;background:#8fbf9f"></div>
<div class="abs" style="left:0;top:694px;width:1318px;height:26px;background:#f8f8f8"></div>
<div class="abs" style="left:1308px;top:246px;width:10px;height:448px;background:#d6d6d6;border-radius:0 0 5px 5px"></div>
<div class="abs" style="left:1308px;top:243px;width:10px;height:182px;background:#fff;border:1px solid #777;border-radius:5px"></div>
<div class="abs" style="left:234px;top:702px;width:991px;height:10px;background:#d6d6d6;border-radius:5px"></div>
<div class="abs" style="left:234px;top:702px;width:302px;height:10px;background:#fff;border:1px solid #777;border-radius:5px"></div>
<svg style="position:absolute;left:1250px;top:698px" width="17" height="17" viewBox="0 0 17 17" ><circle cx="7" cy="7" r="5.5" stroke="#555" stroke-width="1.6" fill="none"/><path d="M11 11 L15 15" stroke="#555" stroke-width="1.8"/><path d="M7 4.2 V9.8 M4.2 7 H9.8" stroke="#555" stroke-width="1.5"/></svg>
<svg style="position:absolute;left:1278px;top:698px" width="17" height="17" viewBox="0 0 17 17" ><circle cx="7" cy="7" r="5.5" stroke="#555" stroke-width="1.6" fill="none"/><path d="M11 11 L15 15" stroke="#555" stroke-width="1.8"/><path d="M4.2 7 H9.8" stroke="#555" stroke-width="1.5"/></svg>
<div class="abs" style="left:1265px;top:178px;width:44px;height:44px;border-radius:22px;background:#480c83;box-shadow:0 1px 4px rgba(0,0,0,0.35)"></div>
<div class="abs" style="left:1265px;top:232px;width:44px;height:44px;border-radius:22px;background:#480c83;box-shadow:0 1px 4px rgba(0,0,0,0.35)"></div>
<div class="abs" style="left:1265px;top:286px;width:44px;height:44px;border-radius:22px;background:#480c83;box-shadow:0 1px 4px rgba(0,0,0,0.35)"></div>
<div class="abs" style="left:1265px;top:340px;width:44px;height:44px;border-radius:22px;background:#480c83;box-shadow:0 1px 4px rgba(0,0,0,0.35)"></div>
<svg style="position:absolute;left:1265px;top:178px" width="44" height="44" viewBox="0 0 44 44" ><circle cx="15.5" cy="27" r="2.9" stroke="#fff" stroke-width="2" fill="none"/><circle cx="26" cy="24.5" r="2.9" stroke="#fff" stroke-width="2" fill="none"/><path d="M18.4 27 V17.5 L29.3 13.6 V24.5" stroke="#fff" stroke-width="2" fill="none" stroke-linejoin="round"/></svg>
<svg style="position:absolute;left:1265px;top:232px" width="44" height="44" viewBox="0 0 44 44" ><path d="M15.6 23.6 A5 5 0 1 1 22 23.6" stroke="#fff" stroke-width="2" fill="none"/><path d="M15.6 23.6 Q13.6 25.8 12.8 29 M22 23.6 Q24 25.8 24.7 29" stroke="#fff" stroke-width="2" fill="none" stroke-linecap="round"/><path d="M25.6 14.9 A5 5 0 0 1 27.9 24.2 Q30 26.3 31 29" stroke="#fff" stroke-width="2" fill="none" stroke-linecap="round"/></svg>
<svg style="position:absolute;left:1265px;top:286px" width="44" height="44" viewBox="0 0 44 44" ><path d="M22 15 C16.5 15 12.5 18 12.5 22 C12.5 24.5 14 26.3 16 27.3 L15.5 31 L19.8 28.6 C20.5 28.8 21.3 28.9 22 28.9 C27.5 28.9 31.5 26 31.5 22 C31.5 18 27.5 15 22 15Z" stroke="#fff" stroke-width="2" fill="none" stroke-linejoin="round"/></svg>
<div style="position:absolute;left:1277px;top:354px;font-size:17px;line-height:17px;color:#fff;font-weight:bold;white-space:nowrap;font-style:italic;letter-spacing:-0.8px">Fx</div>
<div class="abs" style="left:0;top:720px;width:1318px;height:48px;background:#fdfdfd"></div>
<svg style="position:absolute;left:23px;top:735px" width="18" height="18" viewBox="0 0 18 18" ><path d="M2 6.5 H5 L9.5 2.5 V15.5 L5 11.5 H2 Z" stroke="#555" stroke-width="1.4" fill="none" stroke-linejoin="round"/><path d="M12 6 Q13.5 9 12 12 M14.5 4 Q17 9 14.5 14" stroke="#555" stroke-width="1.4" fill="none"/></svg>
<div class="abs" style="left:59px;top:740px;width:120px;height:6px;border-radius:3px;background:#d8d8d8"></div>
<div class="abs" style="left:138px;top:736px;width:16px;height:16px;border-radius:8px;background:#fff;border:1px solid #666"></div>
<div style="position:absolute;left:235px;top:736px;font-size:22.3px;line-height:22.3px;color:#222;font-weight:normal;white-space:nowrap;letter-spacing:2.6px">01:42.0</div>
<div class="abs" style="left:349px;top:728px;width:60px;height:32px;border-radius:16px;background:#e4e4e4"></div>
<div class="abs" style="left:360px;top:738px;width:12px;height:12px;border-radius:6px;background:#c0104f"></div>
<div style="position:absolute;left:376px;top:737.5px;font-size:12.5px;line-height:12.5px;color:#333;font-weight:normal;white-space:nowrap;-webkit-text-stroke:0.25px currentColor">Rec</div>
<div class="abs" style="left:417px;top:728px;width:32px;height:32px;border-radius:16px;background:#e4e4e4"></div>
<div class="abs" style="left:457px;top:728px;width:32px;height:32px;border-radius:16px;background:#e4e4e4"></div>
<div class="abs" style="left:497px;top:728px;width:32px;height:32px;border-radius:16px;background:#e4e4e4"></div>
<div class="abs" style="left:537px;top:728px;width:32px;height:32px;border-radius:16px;background:#e4e4e4"></div>
<svg style="position:absolute;left:400px;top:728px" width="180" height="32" viewBox="0 0 180 32" ><rect x="28.8" y="11.2" width="1.6" height="10.6" fill="#333"/><path d="M38.6 11.2 V21.8 L32.6 16.5Z" fill="#333"/><path d="M70.5 11.5 L65.8 16.5 L70.5 21.5" stroke="#333" stroke-width="1.6" fill="none"/><path d="M77.6 11.2 V21.8 L71.6 16.5Z" fill="#333"/><path d="M109.4 11.2 V22 L118.2 16.6Z" fill="#333"/><path d="M148.6 11.2 V21.8 L154.6 16.5Z" fill="#333"/><path d="M155.7 11.5 L160.4 16.5 L155.7 21.5" stroke="#333" stroke-width="1.6" fill="none"/></svg>
<div style="position:absolute;left:613px;top:740.5px;font-size:11.5px;line-height:11.5px;color:#555;font-weight:normal;white-space:nowrap;-webkit-text-stroke:0.25px currentColor">Key</div>
<div style="position:absolute;left:636px;top:737px;font-size:15px;line-height:15px;color:#222;font-weight:normal;white-space:nowrap;-webkit-text-stroke:0.25px currentColor">Cm</div>
<div style="position:absolute;left:700px;top:740.5px;font-size:11.5px;line-height:11.5px;color:#555;font-weight:normal;white-space:nowrap;-webkit-text-stroke:0.25px currentColor">Tempo</div>
<div style="position:absolute;left:740px;top:737.5px;font-size:14px;line-height:14px;color:#222;font-weight:normal;white-space:nowrap;-webkit-text-stroke:0.25px currentColor">178</div>
<div class="abs" style="left:798px;top:728px;width:32px;height:32px;border-radius:16px;background:#e6e6e6"></div>
<svg style="position:absolute;left:800px;top:730px" width="30" height="28" viewBox="0 0 30 28" ><path d="M16.5 6.5 H13.5 L9.5 21 H21 L19.8 15" stroke="#333" stroke-width="1.5" fill="none" stroke-linejoin="round"/><path d="M11 17.5 H18" stroke="#333" stroke-width="1.3"/><path d="M14 17 L21 6.5" stroke="#333" stroke-width="1.5"/></svg>
<svg style="position:absolute;left:839px;top:740px" width="14" height="11" viewBox="0 0 14 11" ><path d="M1 1.5 L7 8.5 L13 1.5" stroke="#444" stroke-width="1.5" fill="none"/></svg>
<div class="abs" style="left:1197px;top:725px;width:107px;height:38px;border-radius:19px;background:#c9cacd"></div>
<svg style="position:absolute;left:1213px;top:734px" width="20" height="20" viewBox="0 0 20 20" ><path d="M10 2.5 C5.5 2.5 2.5 5.5 2.5 9.5 C2.5 11.5 3.5 13 4.5 14 L3.5 17.5 L7.5 16.2 C8.3 16.5 9.1 16.6 10 16.6 C14.5 16.6 17.5 13.6 17.5 9.5 C17.5 5.5 14.5 2.5 10 2.5Z" stroke="#444" stroke-width="1.9" fill="none" stroke-linejoin="round"/></svg>
<div style="position:absolute;left:1239px;top:738px;font-size:12px;line-height:12px;color:#444;font-weight:bold;white-space:nowrap;">Support</div>
</body></html>
